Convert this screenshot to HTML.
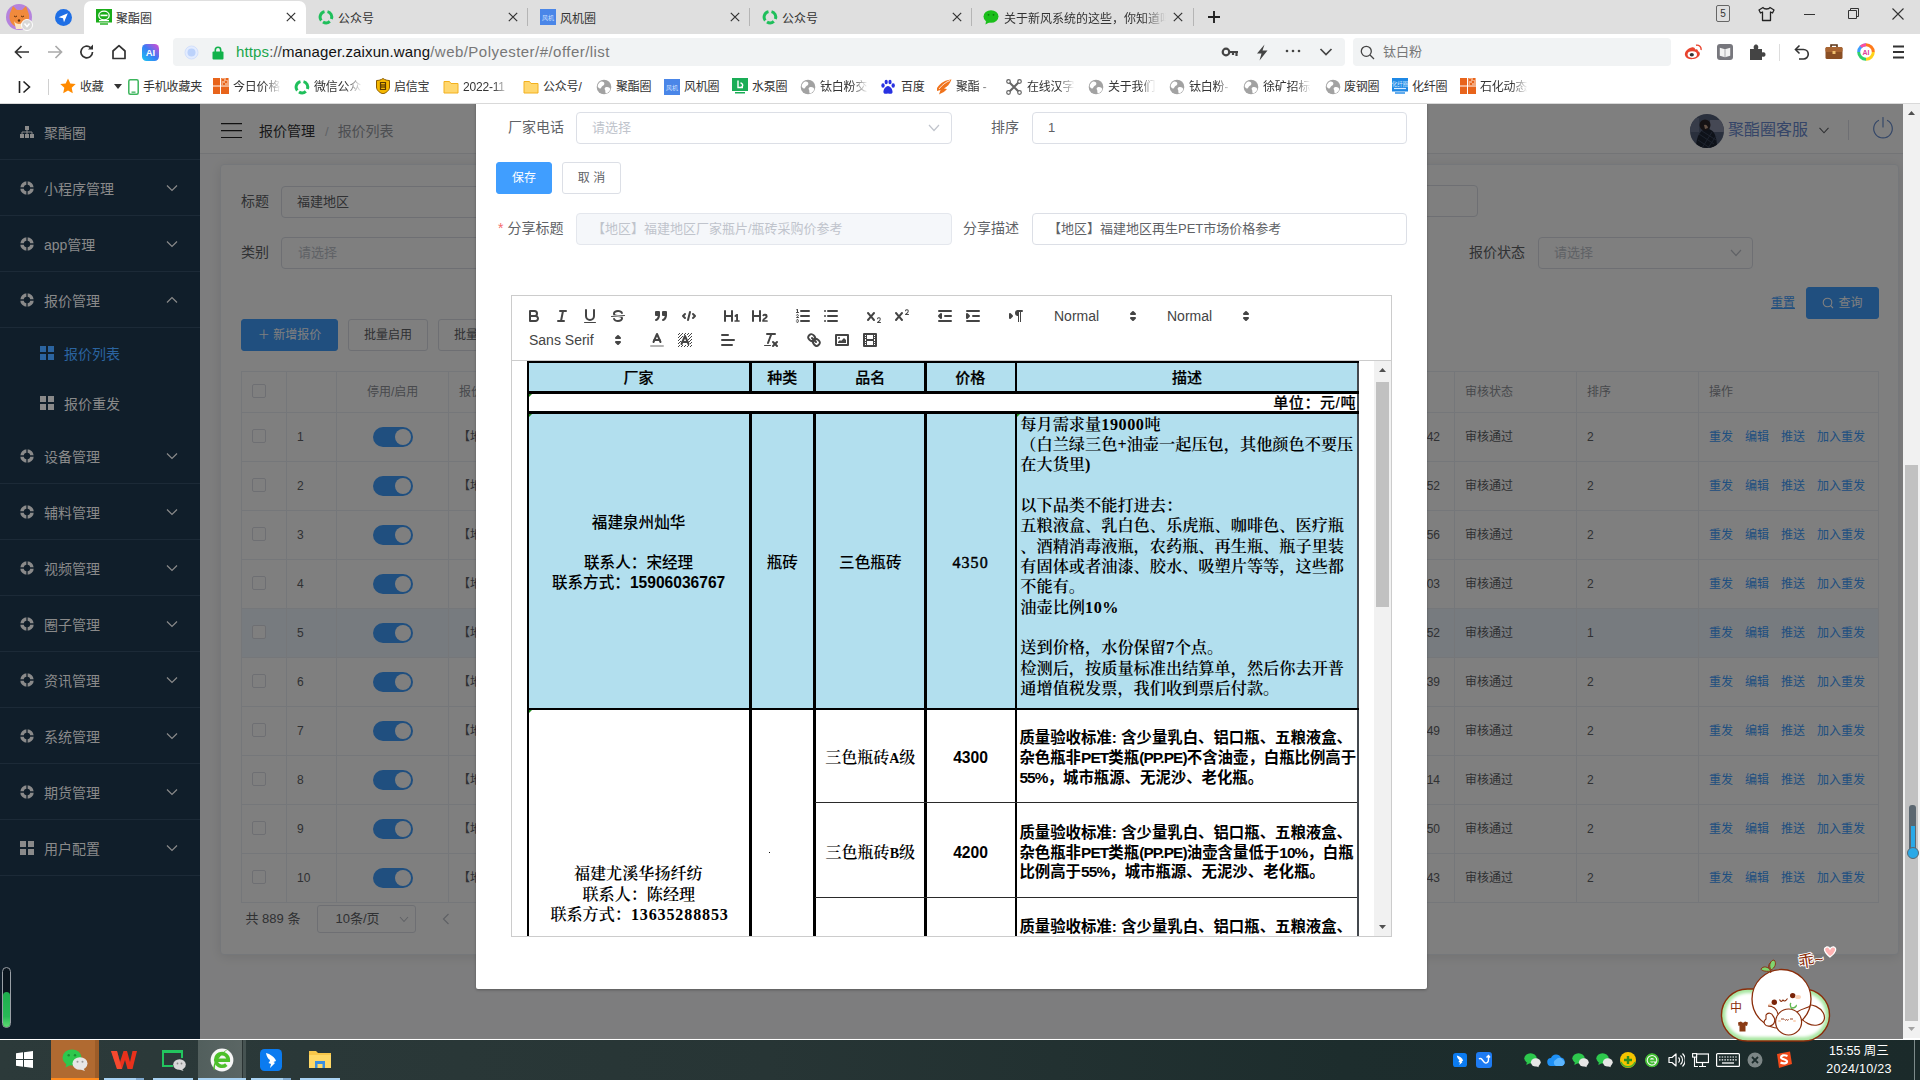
<!DOCTYPE html>
<html lang="zh-CN">
<head>
<meta charset="utf-8">
<title>聚酯圈</title>
<style>
*{box-sizing:border-box;margin:0;padding:0}
html,body{width:1920px;height:1080px;overflow:hidden;background:#fff}
body{font-family:"Liberation Sans","Noto Sans CJK SC",sans-serif;font-size:14px;color:#606266;position:relative}
.abs{position:absolute}
svg{display:block}
/* ---------- browser chrome ---------- */
#tabbar{position:absolute;left:0;top:0;width:1920px;height:34px;background:#dfdfdf}
.tab{position:absolute;top:0;height:34px;font-size:12px;color:#333;line-height:34px;white-space:nowrap}
.tab .fav{position:absolute;top:9px;width:16px;height:16px}
.tab .tt{position:absolute;top:2px;left:32px}
.tab .x{position:absolute;top:10px;width:14px;height:14px}
.tab.active{background:#fff;border-radius:7px 7px 0 0;top:1px;height:33px}
.tsep{position:absolute;top:8px;width:1px;height:18px;background:#b5b5b5}
#addr{position:absolute;left:0;top:34px;width:1920px;height:36px;background:#fff}
#bm{position:absolute;left:0;top:70px;width:1920px;height:34px;background:#fff;font-size:12px;color:#333;border-bottom:1px solid #d9d9d9}
#bm .t{position:absolute;top:1px;line-height:33px;white-space:nowrap;letter-spacing:-.2px}
#bm .i{position:absolute;top:9px;width:16px;height:16px}
.fade{-webkit-mask-image:linear-gradient(90deg,#000 66%,transparent 100%);mask-image:linear-gradient(90deg,#000 66%,transparent 100%)}
.pill{position:absolute;top:4px;height:28px;background:#f1f3f4;border-radius:4px}
/* ---------- page ---------- */
#page{position:absolute;left:0;top:104px;width:1903px;height:935px;background:#fbfbfc;overflow:hidden}
#side{position:absolute;left:0;top:0;width:200px;height:935px;background:#101e2a;z-index:30;color:#8a8a8a;font-size:14px}
#side .it{position:absolute;left:0;width:200px;height:56px;line-height:56px;border-bottom:1px solid #1c2a37}
#side .it .ic{position:absolute;left:20px;top:21px;width:14px;height:14px}
#side .it .tx{position:absolute;left:44px;top:1px;white-space:nowrap}
#side .it .ar{position:absolute;left:166px;top:23px;width:12px;height:10px}
#side .sub{position:absolute;left:0;width:200px;height:50px;line-height:50px}
#side .sub .ic{position:absolute;left:40px;top:18px;width:14px;height:14px}
#side .sub .tx{position:absolute;left:64px;top:1px}
#ovl{position:absolute;left:200px;top:0;width:1703px;height:935px;background:rgba(0,0,0,.5);z-index:20}
#main{position:absolute;left:200px;top:0;width:1703px;height:935px}
#nav{position:absolute;left:0;top:0;width:1703px;height:50px;background:#fff;border-bottom:1px solid #e6e8ec}
#card{position:absolute;left:20px;top:60px;width:1679px;height:791px;background:#fff;border-radius:4px;border:1px solid #ebeef5;box-shadow:0 2px 12px 0 rgba(0,0,0,.1)}
.lbl{position:absolute;font-size:14px;color:#606266;white-space:nowrap;line-height:32px}
.inp{position:absolute;height:32px;border:1px solid #dcdfe6;border-radius:4px;background:#fff;font-size:13px;color:#606266;line-height:30px;padding-left:15px;white-space:nowrap;overflow:hidden}
.inp.ph{color:#c0c4cc}
.inp.dis{background:#f5f7fa;border-color:#e4e7ed;color:#c0c4cc}
.btn{position:absolute;height:32px;border-radius:3px;font-size:12px;line-height:30px;text-align:center;border:1px solid #dcdfe6;background:#fff;color:#606266;white-space:nowrap}
.btn.pri{background:#409eff;border-color:#409eff;color:#fff}
/* table */
#tbl{position:absolute;left:20px;top:206px;width:1638px;height:532px;font-size:12px;color:#606266}
#tbl .hl{position:absolute;left:0;width:1638px;height:1px;background:#ebeef5}
#tbl .vl{position:absolute;top:0;width:1px;height:532px;background:#ebeef5}
#tbl .c{position:absolute;white-space:nowrap;line-height:51px;height:49px}
#tbl .h{color:#909399;line-height:43px;height:41px}
.cb{position:absolute;width:14px;height:14px;border:1px solid #dcdfe6;border-radius:2px;background:#fff}
.sw{position:absolute;width:40px;height:20px;border-radius:10px;background:#409eff}
.sw:after{content:"";position:absolute;right:2px;top:2px;width:16px;height:16px;border-radius:8px;background:#fff}
.lk{color:#409eff}
/* ---------- modal ---------- */
#modal{position:absolute;left:476px;top:-40px;width:951px;height:925px;background:#fff;border-radius:2px;z-index:40;box-shadow:0 1px 3px rgba(0,0,0,.3)}
#modal .lbl{font-size:14px;color:#606266}
#modal .inp{font-size:13px}
/* quill */
#ql{position:absolute;left:35px;top:231px;width:881px;height:642px;border:1px solid #ccc}
#qtb{position:absolute;left:0;top:0;width:879px;height:65px;border-bottom:1px solid #ccc}
.qb{position:absolute;width:18px;height:18px}
.qb .s{fill:none;stroke:#444;stroke-linecap:round;stroke-linejoin:round;stroke-width:2}
.qb .f{fill:#444}
.qb .sf{fill:#444;stroke:#444;stroke-linecap:round;stroke-linejoin:round;stroke-width:2}
.qb .th{stroke-width:1}
.qb .ev{fill-rule:evenodd}
.qp{position:absolute;font-size:14px;font-weight:500;color:#444;line-height:24px;white-space:nowrap}
#qed{position:absolute;left:0;top:65px;width:879px;height:575px;overflow:hidden;background:#fff}
/* editor table */
#et{position:absolute;left:15px;top:0;width:833px;height:640px}
#et .bl{position:absolute;background:#000}
#et .bg{position:absolute;background:#b2dfee}
#et .hd{position:absolute;font-family:"Liberation Sans","Noto Sans CJK SC",sans-serif;font-weight:700;font-size:15px;color:#000;text-align:center;line-height:20px;white-space:nowrap;letter-spacing:1px}
#et .sf{position:absolute;font-family:"Liberation Serif","Noto Serif CJK SC",serif;font-weight:600;font-size:15px;color:#000;white-space:nowrap;line-height:20.35px}
#et .ss{position:absolute;font-family:"Liberation Sans","Noto Sans CJK SC",sans-serif;font-weight:700;font-size:15px;color:#000;white-space:nowrap;line-height:23px}
/* ---------- taskbar ---------- */
#task{position:absolute;left:0;top:1040px;width:1920px;height:40px;background:linear-gradient(90deg,#2c3a3a 0%,#273535 40%,#1d2d2d 70%,#1b2a2a 100%)}
#winline{position:absolute;left:0;top:1038px;width:1920px;height:2px;background:#fff}
#sbar{position:absolute;left:1903px;top:104px;width:17px;height:935px;background:#f1f1f1}
</style>
</head>
<body>
<!-- ================= browser chrome ================= -->
<div id="tabbar">
  <!-- avatar -->
  <svg class="abs" style="left:5px;top:3px" width="30" height="30" viewBox="0 0 30 30">
    <circle cx="14" cy="14" r="13" fill="#b583dd"/>
    <path d="M5 10 L8 3 L12 7 L17 7 L21 3 L23.500 10 C26 17 21 24 14 24 C7 24 3 17 5 10Z" fill="#f08a3c"/>
    <path d="M9 18 C11 22 17 22 19 18 L17 26 L11 26Z" fill="#fbe3c4"/>
    <circle cx="14" cy="17.500" r="1.200" fill="#5a2d0c"/>
    <path d="M9 13 q1.500 1.500 3 0 M16 13 q1.500 1.500 3 0" stroke="#5a2d0c" stroke-width="1" fill="none"/>
    <circle cx="22" cy="22" r="5.500" fill="#d8d8d8" stroke="#fff" stroke-width="1"/>
    <path d="M19.500 20.500 L22 23.500 L24.500 20.500" stroke="#fff" stroke-width="1.500" fill="none"/>
  </svg>
  <!-- blue plane -->
  <svg class="abs" style="left:55px;top:9px" width="17" height="17" viewBox="0 0 17 17">
    <circle cx="8.500" cy="8.500" r="8.500" fill="#1f6fe5"/>
    <path d="M3.500 8.200 L12.800 4.200 L9 13.300 L8 9.300Z" fill="#fff"/>
  </svg>
  <!-- active tab -->
  <div class="tab active" style="left:84px;width:222px">
    <svg class="fav" style="left:12px;top:8px" viewBox="0 0 16 16"><rect x="0" y="0" width="16" height="13.500" fill="#1aad19"/><ellipse cx="8" cy="6.500" rx="5.200" ry="4.300" fill="none" stroke="#fff" stroke-width="1.300"/><rect x="4.500" y="5.600" width="7" height="1.600" fill="#fff"/><rect x="3" y="11" width="10" height="1.300" fill="#fff"/><rect x="4" y="14.300" width="8" height="1.400" fill="#1aad19"/></svg>
    <span class="tt" style="left:32px;top:1px">聚酯圈</span>
    <svg class="x" style="left:200px;top:9px" viewBox="0 0 14 14"><path d="M2.800 2.800 L11.200 11.200 M11.200 2.800 L2.800 11.200" stroke="#333" stroke-width="1.200"/></svg>
  </div>
  <!-- tab 2 -->
  <div class="tab" style="left:306px;width:222px">
    <svg class="fav" style="left:12px" viewBox="0 0 16 16"><g fill="none" stroke="#1fbf5b" stroke-width="3"><path d="M3.300 11.500 A5.600 5.600 0 0 1 6.500 2.600"/><path d="M9.500 2.600 A5.600 5.600 0 0 1 13.400 10"/><path d="M11.800 12.300 A5.600 5.600 0 0 1 5 12.900"/></g></svg>
    <span class="tt">公众号</span>
    <svg class="x" style="left:200px" viewBox="0 0 14 14"><path d="M2.800 2.800 L11.200 11.200 M11.200 2.800 L2.800 11.200" stroke="#333" stroke-width="1.200"/></svg>
  </div>
  <div class="tsep" style="left:527px"></div>
  <!-- tab 3 -->
  <div class="tab" style="left:528px;width:222px">
    <svg class="fav" style="left:12px" viewBox="0 0 16 16"><rect width="16" height="16" fill="#4a86e8"/><text x="8" y="10.500" font-size="6" fill="#cfe0ff" text-anchor="middle" font-family="Liberation Sans,Noto Sans CJK SC,sans-serif">风机</text></svg>
    <span class="tt">风机圈</span>
    <svg class="x" style="left:200px" viewBox="0 0 14 14"><path d="M2.800 2.800 L11.200 11.200 M11.200 2.800 L2.800 11.200" stroke="#333" stroke-width="1.200"/></svg>
  </div>
  <div class="tsep" style="left:749px"></div>
  <!-- tab 4 -->
  <div class="tab" style="left:750px;width:222px">
    <svg class="fav" style="left:12px" viewBox="0 0 16 16"><g fill="none" stroke="#1fbf5b" stroke-width="3"><path d="M3.300 11.500 A5.600 5.600 0 0 1 6.500 2.600"/><path d="M9.500 2.600 A5.600 5.600 0 0 1 13.400 10"/><path d="M11.800 12.300 A5.600 5.600 0 0 1 5 12.900"/></g></svg>
    <span class="tt">公众号</span>
    <svg class="x" style="left:200px" viewBox="0 0 14 14"><path d="M2.800 2.800 L11.200 11.200 M11.200 2.800 L2.800 11.200" stroke="#333" stroke-width="1.200"/></svg>
  </div>
  <div class="tsep" style="left:971px"></div>
  <!-- tab 5 -->
  <div class="tab" style="left:972px;width:222px">
    <svg class="fav" style="left:11px" viewBox="0 0 16 16"><ellipse cx="8" cy="7.500" rx="7.500" ry="6.300" fill="#1bbf1b"/><path d="M3 12 L2.500 15.500 L7 13Z" fill="#1bbf1b"/><circle cx="5.500" cy="5.800" r=".9" fill="#0b7a0b"/><circle cx="10.500" cy="5.800" r=".9" fill="#0b7a0b"/></svg>
    <span class="tt" style="left:32px;width:162px;overflow:hidden;-webkit-mask-image:linear-gradient(90deg,#000 86%,transparent 100%);mask-image:linear-gradient(90deg,#000 86%,transparent 100%)">关于新风系统的这些，你知道吗</span>
    <svg class="x" style="left:199px" viewBox="0 0 14 14"><path d="M2.800 2.800 L11.200 11.200 M11.200 2.800 L2.800 11.200" stroke="#333" stroke-width="1.200"/></svg>
  </div>
  <div class="tsep" style="left:1193px"></div>
  <svg class="abs" style="left:1206px;top:9px" width="16" height="16" viewBox="0 0 16 16"><path d="M8 2 V14 M2 8 H14" stroke="#222" stroke-width="1.900"/></svg>
  <!-- window controls -->
  <div class="abs" style="left:1716px;top:5px;width:14px;height:17px;border:1px solid #666;border-radius:2px;font-size:10px;line-height:15px;text-align:center;color:#333">5</div>
  <svg class="abs" style="left:1758px;top:6px" width="17" height="16" viewBox="0 0 17 16"><path d="M5 1.500 L1 4 L2.500 7 L4.500 6 V14.500 H12.500 V6 L14.500 7 L16 4 L12 1.500 C11 3.500 6 3.500 5 1.500Z" fill="none" stroke="#222" stroke-width="1.300" stroke-linejoin="round"/></svg>
  <div class="abs" style="left:1804px;top:14px;width:11px;height:1px;background:#333"></div>
  <svg class="abs" style="left:1848px;top:8px" width="12" height="12" viewBox="0 0 12 12"><path d="M0.500 2.500 H8.500 V10.500 H0.500Z M2.500 2.500 V0.500 H10.500 V8.500 H8.500" fill="none" stroke="#333" stroke-width="1"/></svg>
  <svg class="abs" style="left:1892px;top:8px" width="12" height="12" viewBox="0 0 12 12"><path d="M0.500 0.500 L11.500 11.500 M11.500 0.500 L0.500 11.500" stroke="#333" stroke-width="1.100"/></svg>
</div>

<div id="addr">
  <svg class="abs" style="left:14px;top:10px" width="16" height="16" viewBox="0 0 16 16"><path d="M15 8 H2 M7.500 2 L1.500 8 L7.500 14" fill="none" stroke="#333" stroke-width="1.700"/></svg>
  <svg class="abs" style="left:47px;top:10px" width="16" height="16" viewBox="0 0 16 16"><path d="M1 8 H14 M8.500 2 L14.500 8 L8.500 14" fill="none" stroke="#aaa" stroke-width="1.700"/></svg>
  <svg class="abs" style="left:79px;top:10px" width="16" height="16" viewBox="0 0 16 16"><path d="M13.500 8 A5.800 5.800 0 1 1 11.500 3.600" fill="none" stroke="#333" stroke-width="1.700"/><path d="M9 5.500 H14 V0.500Z" fill="#333"/></svg>
  <svg class="abs" style="left:111px;top:10px" width="16" height="16" viewBox="0 0 16 16"><path d="M2 14.500 V7 L8 1.700 L14 7 V14.500Z" fill="none" stroke="#333" stroke-width="1.700" stroke-linejoin="round"/></svg>
  <svg class="abs" style="left:142px;top:10px" width="17" height="17" viewBox="0 0 17 17"><defs><linearGradient id="aig" x1="0" y1="1" x2="1" y2="0"><stop offset="0" stop-color="#19c8f0"/><stop offset=".5" stop-color="#3a7cf5"/><stop offset="1" stop-color="#e04ad0"/></linearGradient></defs><rect width="17" height="17" rx="4.500" fill="url(#aig)"/><text x="8.500" y="12.300" font-size="9.500" font-weight="700" fill="#fff" text-anchor="middle" font-family="Liberation Sans,sans-serif">AI</text></svg>
  <div class="pill" style="left:173px;width:1172px"></div>
  <svg class="abs" style="left:184px;top:11px" width="15" height="15" viewBox="0 0 15 15"><circle cx="7.500" cy="7.500" r="6.500" fill="#e3ecff" stroke="#d3e0fb" stroke-width="1"/><circle cx="7.500" cy="7.500" r="4" fill="#bcd2fb"/></svg>
  <svg class="abs" style="left:212px;top:12px" width="12" height="14" viewBox="0 0 12 14"><path d="M3.300 6 V4 A2.700 2.700 0 0 1 8.700 4 V6" fill="none" stroke="#12b24b" stroke-width="1.600"/><rect x="0.500" y="5.500" width="11" height="8" rx="1" fill="#12b24b"/></svg>
  <div class="abs" style="left:236px;top:7px;font-size:15px;line-height:22px;white-space:nowrap;letter-spacing:.12px;color:#777"><span style="color:#1aa64b">https</span><span style="color:#555">://</span><span style="color:#111">manager.zaixun.wang</span><span style="letter-spacing:.46px">/web/Polyester/#/offer/list</span></div>
  <!-- right inside pill -->
  <svg class="abs" style="left:1221px;top:11px" width="18" height="14" viewBox="0 0 18 14"><circle cx="5" cy="7" r="3.300" fill="none" stroke="#444" stroke-width="2.200"/><path d="M8 7 H17 M15.500 7 V11 M12 7 V10" stroke="#444" stroke-width="2.200" fill="none"/></svg>
  <svg class="abs" style="left:1255px;top:10px" width="14" height="17" viewBox="0 0 14 17"><path d="M9.500 0.500 L2 9.500 H6.500 L4.500 16.500 L12.500 6.500 H7.500Z" fill="#444"/></svg>
  <svg class="abs" style="left:1285px;top:15px" width="16" height="4" viewBox="0 0 16 4"><circle cx="2" cy="2" r="1.300" fill="#444"/><circle cx="8" cy="2" r="1.300" fill="#444"/><circle cx="14" cy="2" r="1.300" fill="#444"/></svg>
  <svg class="abs" style="left:1319px;top:14px" width="14" height="8" viewBox="0 0 14 8"><path d="M1.500 1 L7 6.500 L12.500 1" fill="none" stroke="#444" stroke-width="1.700"/></svg>
  <div class="pill" style="left:1353px;width:318px"></div>
  <svg class="abs" style="left:1360px;top:11px" width="15" height="15" viewBox="0 0 15 15"><circle cx="6.300" cy="6.300" r="5" fill="none" stroke="#444" stroke-width="1.300"/><path d="M10 10 L14 14" stroke="#444" stroke-width="1.300"/></svg>
  <div class="abs" style="left:1383px;top:8px;font-size:13px;line-height:20px;color:#777">钛白粉</div>
  <!-- right icons -->
  <svg class="abs" style="left:1684px;top:10px" width="18" height="16" viewBox="0 0 18 16"><path d="M7.500 3.500 C3 4.500 0.300 8.500 1 11.200 C1.700 14.300 5.500 15.600 9.500 15 C13.500 14.400 16.300 11.800 15.800 9.300 C15.500 7.800 14.300 7.300 13.800 7.300 C14.300 5.800 13.300 4.600 11 5.400 C11.200 3.800 9.500 3 7.500 3.500Z" fill="#e8432e"/><path d="M12 1.200 C15 0.600 17.600 3 17 6" fill="none" stroke="#e8432e" stroke-width="1.400"/><ellipse cx="8.300" cy="10.600" rx="4.700" ry="3.300" fill="#fff"/><ellipse cx="7.800" cy="10.800" rx="2.100" ry="1.800" fill="#333"/></svg>
  <svg class="abs" style="left:1716px;top:9px" width="18" height="18" viewBox="0 0 18 18"><rect x="1" y="1" width="16" height="16" rx="3" fill="#77777d"/><path d="M3.800 4.800 L9 6.300 L14.200 4.800 V12.800 L9 14.300 L3.800 12.800Z" fill="#f2f2f2"/><path d="M9 6.300 V14.300" stroke="#9a9aa0" stroke-width=".8"/></svg>
  <svg class="abs" style="left:1748px;top:9px" width="18" height="18" viewBox="0 0 18 18"><path d="M2 6 H6 C5 3 6.500 1.500 8 1.500 C9.500 1.500 11 3 10 6 H14 V9.500 C17 8.500 17.500 10.500 17.500 11.500 C17.500 12.500 17 14.500 14 13.500 V17 H2Z" fill="#444"/></svg>
  <div class="abs" style="left:1779px;top:10px;width:1px;height:17px;background:#ddd"></div>
  <svg class="abs" style="left:1793px;top:10px" width="17" height="17" viewBox="0 0 17 17"><path d="M3 5.500 H10.500 A4.700 4.700 0 0 1 10.500 15 H6" fill="none" stroke="#333" stroke-width="1.600"/><path d="M6.500 1.500 L2.500 5.500 L6.500 9.500" fill="none" stroke="#333" stroke-width="1.600"/></svg>
  <svg class="abs" style="left:1825px;top:9px" width="18" height="17" viewBox="0 0 18 17"><path d="M6 4 V2 H12 V4" fill="none" stroke="#5a3314" stroke-width="1.600"/><rect x="0.500" y="4" width="17" height="12" rx="1.500" fill="#8a4f24"/><rect x="0.500" y="4" width="17" height="5" rx="1.500" fill="#a86431"/><rect x="7.500" y="8" width="3" height="3" fill="#f0c070"/></svg>
  <svg class="abs" style="left:1857px;top:9px" width="18" height="18" viewBox="0 0 18 18"><circle cx="9" cy="9" r="7.300" fill="#fff"/><g fill="none" stroke-width="3"><path d="M9 1.700 A7.300 7.300 0 0 1 16.300 9" stroke="#ff7a1a"/><path d="M16.300 9 A7.300 7.300 0 0 1 9 16.300" stroke="#ffd21a"/><path d="M9 16.300 A7.300 7.300 0 0 1 1.700 9" stroke="#2fd06a"/><path d="M1.700 9 A7.300 7.300 0 0 1 9 1.700" stroke="#3a9dff"/><path d="M3.800 3.800 A7.300 7.300 0 0 1 9 1.700" stroke="#ff4f9a"/></g><text x="9" y="11.700" font-size="7" font-weight="700" fill="#e0409a" text-anchor="middle" font-family="Liberation Sans,sans-serif">AI</text></svg>
  <svg class="abs" style="left:1893px;top:11px" width="11" height="14" viewBox="0 0 11 14"><path d="M0 1.500 H11 M0 7 H11 M0 12.500 H11" stroke="#333" stroke-width="1.900"/></svg>
</div>
<div id="bm">
  <svg class="abs" style="left:18px;top:10px" width="14" height="14" viewBox="0 0 14 14"><path d="M1.500 1 V13 M5.500 1.500 L11.500 7 L5.500 12.500" fill="none" stroke="#222" stroke-width="1.600"/></svg>
  <div class="abs" style="left:48px;top:9px;width:1px;height:16px;background:#d0d0d0"></div>
  <svg class="i" style="left:60px;top:8px" viewBox="0 0 16 16"><path d="M8 0.500 L10.300 5.500 L15.700 6.100 L11.700 9.800 L12.800 15.200 L8 12.500 L3.200 15.200 L4.300 9.800 L0.300 6.100 L5.700 5.500Z" fill="#ff8a00"/></svg>
  <span class="t" style="left:80px">收藏</span>
  <svg class="abs" style="left:114px;top:14px" width="8" height="5" viewBox="0 0 8 5"><path d="M0 0 H8 L4 5Z" fill="#333"/></svg>
  <svg class="abs" style="left:128px;top:9px" width="11" height="16" viewBox="0 0 11 16"><rect x="0.800" y="0.800" width="9.400" height="14.400" rx="1.500" fill="#fff" stroke="#3cb55c" stroke-width="1.500"/><rect x="3.500" y="12.500" width="4" height="1.300" fill="#3cb55c"/></svg>
  <span class="t" style="left:143px">手机收藏夹</span>
  <svg class="i" style="left:213px;top:8px" viewBox="0 0 16 16"><rect width="16" height="16" fill="#e8641b"/><path d="M7.500 0 V16 M0 8 H16" stroke="#fff" stroke-width="1"/><rect x="8.500" y="0" width="7.500" height="7.500" fill="#f4a77a"/><path d="M9 1 h2 v2 h-2z M12 3 h2 v2 h-2z M10 5 h2 v2 h-2z M13 0 h2 v2 h-2z" fill="#e8641b"/></svg>
  <span class="t fade" style="left:233px;width:48px;overflow:hidden">今日价格</span>
  <svg class="i" style="left:294px" viewBox="0 0 16 16"><g fill="none" stroke="#1fbf5b" stroke-width="3"><path d="M3.300 11.500 A5.600 5.600 0 0 1 6.500 2.600"/><path d="M9.500 2.600 A5.600 5.600 0 0 1 13.400 10"/><path d="M11.800 12.300 A5.600 5.600 0 0 1 5 12.900"/></g></svg>
  <span class="t fade" style="left:314px;width:48px;overflow:hidden">微信公众</span>
  <svg class="i" style="left:375px;top:8px" viewBox="0 0 16 16"><path d="M8 0.500 C10 2 12.500 2.500 14.500 2.500 V9 C14.500 12.500 11 15 8 15.800 C5 15 1.500 12.500 1.500 9 V2.500 C3.500 2.500 6 2 8 0.500Z" fill="#f5b800" stroke="#8a5a00" stroke-width="1"/><path d="M5.500 4.500 H10.500 V11.500 H5.500Z M7 6 V10 M9 6 V10" fill="none" stroke="#5a3a00" stroke-width="1.200"/></svg>
  <span class="t" style="left:394px">启信宝</span>
  <svg class="i" style="left:443px" viewBox="0 0 16 16"><path d="M1 2.500 H6.500 L8 4.500 H15 V14 H1Z" fill="#ffd76e" stroke="#f2b01e" stroke-width="1"/></svg>
  <span class="t fade" style="left:463px;width:46px;overflow:hidden">2022-11</span>
  <svg class="i" style="left:523px" viewBox="0 0 16 16"><path d="M1 2.500 H6.500 L8 4.500 H15 V14 H1Z" fill="#ffd76e" stroke="#f2b01e" stroke-width="1"/></svg>
  <span class="t" style="left:543px">公众号/</span>
  <svg class="i" style="left:596px" viewBox="0 0 16 16"><circle cx="8" cy="8" r="7.300" fill="#a2a2a2"/><path d="M4.500 2.800 C6.500 2 8.800 3 8.300 5.200 C7.800 7 5.800 6.500 5.300 8.500 C4.800 10.300 3 9.500 1.800 8 C1.500 5.800 2.700 3.800 4.500 2.800Z M9.800 8.200 C11.800 7.500 13.800 8.500 14.300 10 C13.800 12.500 11.800 14 9.800 14.400 C8.800 13 9.800 11.500 8.800 10.500 C8.300 9.500 8.800 8.500 9.800 8.200Z" fill="#fff"/></svg>
  <span class="t" style="left:616px">聚酯圈</span>
  <svg class="i" style="left:664px" viewBox="0 0 16 16"><rect width="16" height="16" fill="#4a86e8"/><text x="8" y="10.500" font-size="6" fill="#cfe0ff" text-anchor="middle" font-family="Liberation Sans,Noto Sans CJK SC,sans-serif">风机</text></svg>
  <span class="t" style="left:684px">风机圈</span>
  <svg class="i" style="left:732px;top:8px" viewBox="0 0 16 16"><rect width="16" height="13" fill="#1aad56"/><path d="M6 2.500 V9.500 H11 M8.500 5 A2.200 2.200 0 1 1 8.500 9.400" fill="none" stroke="#fff" stroke-width="1.400"/><rect x="3" y="14" width="10" height="1.500" fill="#1aad56"/></svg>
  <span class="t" style="left:752px">水泵圈</span>
  <svg class="i" style="left:800px" viewBox="0 0 16 16"><circle cx="8" cy="8" r="7.300" fill="#a2a2a2"/><path d="M4.500 2.800 C6.500 2 8.800 3 8.300 5.200 C7.800 7 5.800 6.500 5.300 8.500 C4.800 10.300 3 9.500 1.800 8 C1.500 5.800 2.700 3.800 4.500 2.800Z M9.800 8.200 C11.800 7.500 13.800 8.500 14.300 10 C13.800 12.500 11.800 14 9.800 14.400 C8.800 13 9.800 11.500 8.800 10.500 C8.300 9.500 8.800 8.500 9.800 8.200Z" fill="#fff"/></svg>
  <span class="t fade" style="left:820px;width:48px;overflow:hidden">钛白粉交</span>
  <svg class="i" style="left:880px" viewBox="0 0 16 16"><g fill="#2932e1"><ellipse cx="3" cy="6.500" rx="1.700" ry="2.300"/><ellipse cx="6.200" cy="3" rx="1.600" ry="2.300"/><ellipse cx="10" cy="3" rx="1.600" ry="2.300"/><ellipse cx="13.200" cy="6.500" rx="1.700" ry="2.300"/><path d="M8 7 C10.500 7 13 11 12.500 13.500 C12 15.500 9.500 14.500 8 14.500 C6.500 14.500 4 15.500 3.500 13.500 C3 11 5.500 7 8 7Z"/></g></svg>
  <span class="t" style="left:901px">百度</span>
  <svg class="i" style="left:936px" viewBox="0 0 16 16"><path d="M1 9 C5 3 10 1 15.500 0.500 C14 5 11 8 8 9.500 L11 10 C9 12.500 6 14 3 15.500 L4.500 11 L1 12Z" fill="#f0731c"/><path d="M3 10 C6 6 10 3 14 1.500" stroke="#fff" stroke-width=".8" fill="none"/></svg>
  <span class="t fade" style="left:956px;width:36px;overflow:hidden">聚酯 -</span>
  <svg class="i" style="left:1006px" viewBox="0 0 16 16"><path d="M2.500 2.500 L13.500 13.500 M13.500 2.500 L2.500 13.500" stroke="#666" stroke-width="2"/><circle cx="2.500" cy="2.500" r="1.800" fill="#fff" stroke="#666" stroke-width="1.200"/><circle cx="13.500" cy="2.500" r="1.800" fill="#fff" stroke="#666" stroke-width="1.200"/><circle cx="2.500" cy="13.500" r="1.800" fill="#fff" stroke="#666" stroke-width="1.200"/><circle cx="13.500" cy="13.500" r="1.800" fill="#fff" stroke="#666" stroke-width="1.200"/></svg>
  <span class="t fade" style="left:1027px;width:48px;overflow:hidden">在线汉字</span>
  <svg class="i" style="left:1088px" viewBox="0 0 16 16"><circle cx="8" cy="8" r="7.300" fill="#a2a2a2"/><path d="M4.500 2.800 C6.500 2 8.800 3 8.300 5.200 C7.800 7 5.800 6.500 5.300 8.500 C4.800 10.300 3 9.500 1.800 8 C1.500 5.800 2.700 3.800 4.500 2.800Z M9.800 8.200 C11.800 7.500 13.800 8.500 14.300 10 C13.800 12.500 11.800 14 9.800 14.400 C8.800 13 9.800 11.500 8.800 10.500 C8.300 9.500 8.800 8.500 9.800 8.200Z" fill="#fff"/></svg>
  <span class="t fade" style="left:1108px;width:48px;overflow:hidden">关于我们</span>
  <svg class="i" style="left:1169px" viewBox="0 0 16 16"><circle cx="8" cy="8" r="7.300" fill="#a2a2a2"/><path d="M4.500 2.800 C6.500 2 8.800 3 8.300 5.200 C7.800 7 5.800 6.500 5.300 8.500 C4.800 10.300 3 9.500 1.800 8 C1.500 5.800 2.700 3.800 4.500 2.800Z M9.800 8.200 C11.800 7.500 13.800 8.500 14.300 10 C13.800 12.500 11.800 14 9.800 14.400 C8.800 13 9.800 11.500 8.800 10.500 C8.300 9.500 8.800 8.500 9.800 8.200Z" fill="#fff"/></svg>
  <span class="t fade" style="left:1189px;width:42px;overflow:hidden">钛白粉-</span>
  <svg class="i" style="left:1243px" viewBox="0 0 16 16"><circle cx="8" cy="8" r="7.300" fill="#a2a2a2"/><path d="M4.500 2.800 C6.500 2 8.800 3 8.300 5.200 C7.800 7 5.800 6.500 5.300 8.500 C4.800 10.300 3 9.500 1.800 8 C1.500 5.800 2.700 3.800 4.500 2.800Z M9.800 8.200 C11.800 7.500 13.800 8.500 14.300 10 C13.800 12.500 11.800 14 9.800 14.400 C8.800 13 9.800 11.500 8.800 10.500 C8.300 9.500 8.800 8.500 9.800 8.200Z" fill="#fff"/></svg>
  <span class="t fade" style="left:1263px;width:48px;overflow:hidden">徐矿招标</span>
  <svg class="i" style="left:1325px" viewBox="0 0 16 16"><circle cx="8" cy="8" r="7.300" fill="#a2a2a2"/><path d="M4.500 2.800 C6.500 2 8.800 3 8.300 5.200 C7.800 7 5.800 6.500 5.300 8.500 C4.800 10.300 3 9.500 1.800 8 C1.500 5.800 2.700 3.800 4.500 2.800Z M9.800 8.200 C11.800 7.500 13.800 8.500 14.300 10 C13.800 12.500 11.800 14 9.800 14.400 C8.800 13 9.800 11.500 8.800 10.500 C8.300 9.500 8.800 8.500 9.800 8.200Z" fill="#fff"/></svg>
  <span class="t" style="left:1344px">废钢圈</span>
  <svg class="i" style="left:1392px;top:8px" viewBox="0 0 16 16"><rect width="16" height="13.500" fill="#1e88e5"/><text x="8" y="8" font-size="5.500" fill="#d8ecff" text-anchor="middle" font-family="Liberation Sans,Noto Sans CJK SC,sans-serif">化纤圈</text><path d="M2 10.500 H14" stroke="#d8ecff" stroke-width="1.200"/><rect x="3" y="14.300" width="10" height="1.400" fill="#1e88e5"/></svg>
  <span class="t" style="left:1412px">化纤圈</span>
  <svg class="i" style="left:1460px;top:8px" viewBox="0 0 16 16"><rect width="16" height="16" fill="#e8641b"/><path d="M7.500 0 V16 M0 8 H16" stroke="#fff" stroke-width="1"/><rect x="8.500" y="0" width="7.500" height="7.500" fill="#f4a77a"/><path d="M9 1 h2 v2 h-2z M12 3 h2 v2 h-2z M10 5 h2 v2 h-2z M13 0 h2 v2 h-2z" fill="#e8641b"/></svg>
  <span class="t fade" style="left:1480px;width:48px;overflow:hidden">石化动态</span>
</div>
<!-- ================= page ================= -->
<div id="page">
<div id="side">
<div class="it" style="top:0px"><svg class="ic" viewBox="0 0 14 14"><g fill="#8a8a8a"><rect x="5" y="1" width="4" height="4"/><rect x="0" y="9" width="4" height="4"/><rect x="5" y="9" width="4" height="4"/><rect x="10" y="9" width="4" height="4"/></g><path d="M7 5 V9 M2 9 V7 H12 V9" fill="none" stroke="#8a8a8a" stroke-width="1"/></svg><span class="tx">聚酯圈</span></div>
<div class="it" style="top:56px"><svg class="ic" viewBox="0 0 14 14"><circle cx="7" cy="7" r="5" fill="none" stroke="#8a8a8a" stroke-width="3.600"/><path d="M7 0 V14 M0 7 H14" stroke="#101e2a" stroke-width="1.300"/></svg><span class="tx">小程序管理</span><svg class="ar" viewBox="0 0 12 10"><path d="M1 2.500 L6 7.500 L11 2.500" fill="none" stroke="#8a8a8a" stroke-width="1.200"/></svg></div>
<div class="it" style="top:112px"><svg class="ic" viewBox="0 0 14 14"><circle cx="7" cy="7" r="5" fill="none" stroke="#8a8a8a" stroke-width="3.600"/><path d="M7 0 V14 M0 7 H14" stroke="#101e2a" stroke-width="1.300"/></svg><span class="tx">app管理</span><svg class="ar" viewBox="0 0 12 10"><path d="M1 2.500 L6 7.500 L11 2.500" fill="none" stroke="#8a8a8a" stroke-width="1.200"/></svg></div>
<div class="it" style="top:168px"><svg class="ic" viewBox="0 0 14 14"><circle cx="7" cy="7" r="5" fill="none" stroke="#8a8a8a" stroke-width="3.600"/><path d="M7 0 V14 M0 7 H14" stroke="#101e2a" stroke-width="1.300"/></svg><span class="tx">报价管理</span><svg class="ar" viewBox="0 0 12 10"><path d="M1 7.500 L6 2.500 L11 7.500" fill="none" stroke="#8a8a8a" stroke-width="1.200"/></svg></div>
<div class="it" style="top:324px"><svg class="ic" viewBox="0 0 14 14"><circle cx="7" cy="7" r="5" fill="none" stroke="#8a8a8a" stroke-width="3.600"/><path d="M7 0 V14 M0 7 H14" stroke="#101e2a" stroke-width="1.300"/></svg><span class="tx">设备管理</span><svg class="ar" viewBox="0 0 12 10"><path d="M1 2.500 L6 7.500 L11 2.500" fill="none" stroke="#8a8a8a" stroke-width="1.200"/></svg></div>
<div class="it" style="top:380px"><svg class="ic" viewBox="0 0 14 14"><circle cx="7" cy="7" r="5" fill="none" stroke="#8a8a8a" stroke-width="3.600"/><path d="M7 0 V14 M0 7 H14" stroke="#101e2a" stroke-width="1.300"/></svg><span class="tx">辅料管理</span><svg class="ar" viewBox="0 0 12 10"><path d="M1 2.500 L6 7.500 L11 2.500" fill="none" stroke="#8a8a8a" stroke-width="1.200"/></svg></div>
<div class="it" style="top:436px"><svg class="ic" viewBox="0 0 14 14"><circle cx="7" cy="7" r="5" fill="none" stroke="#8a8a8a" stroke-width="3.600"/><path d="M7 0 V14 M0 7 H14" stroke="#101e2a" stroke-width="1.300"/></svg><span class="tx">视频管理</span><svg class="ar" viewBox="0 0 12 10"><path d="M1 2.500 L6 7.500 L11 2.500" fill="none" stroke="#8a8a8a" stroke-width="1.200"/></svg></div>
<div class="it" style="top:492px"><svg class="ic" viewBox="0 0 14 14"><circle cx="7" cy="7" r="5" fill="none" stroke="#8a8a8a" stroke-width="3.600"/><path d="M7 0 V14 M0 7 H14" stroke="#101e2a" stroke-width="1.300"/></svg><span class="tx">圈子管理</span><svg class="ar" viewBox="0 0 12 10"><path d="M1 2.500 L6 7.500 L11 2.500" fill="none" stroke="#8a8a8a" stroke-width="1.200"/></svg></div>
<div class="it" style="top:548px"><svg class="ic" viewBox="0 0 14 14"><circle cx="7" cy="7" r="5" fill="none" stroke="#8a8a8a" stroke-width="3.600"/><path d="M7 0 V14 M0 7 H14" stroke="#101e2a" stroke-width="1.300"/></svg><span class="tx">资讯管理</span><svg class="ar" viewBox="0 0 12 10"><path d="M1 2.500 L6 7.500 L11 2.500" fill="none" stroke="#8a8a8a" stroke-width="1.200"/></svg></div>
<div class="it" style="top:604px"><svg class="ic" viewBox="0 0 14 14"><circle cx="7" cy="7" r="5" fill="none" stroke="#8a8a8a" stroke-width="3.600"/><path d="M7 0 V14 M0 7 H14" stroke="#101e2a" stroke-width="1.300"/></svg><span class="tx">系统管理</span><svg class="ar" viewBox="0 0 12 10"><path d="M1 2.500 L6 7.500 L11 2.500" fill="none" stroke="#8a8a8a" stroke-width="1.200"/></svg></div>
<div class="it" style="top:660px"><svg class="ic" viewBox="0 0 14 14"><circle cx="7" cy="7" r="5" fill="none" stroke="#8a8a8a" stroke-width="3.600"/><path d="M7 0 V14 M0 7 H14" stroke="#101e2a" stroke-width="1.300"/></svg><span class="tx">期货管理</span><svg class="ar" viewBox="0 0 12 10"><path d="M1 2.500 L6 7.500 L11 2.500" fill="none" stroke="#8a8a8a" stroke-width="1.200"/></svg></div>
<div class="it" style="top:716px"><svg class="ic" viewBox="0 0 14 14"><g fill="#8a8a8a"><rect x="0" y="0" width="6" height="6"/><rect x="8" y="0" width="6" height="6"/><rect x="0" y="8" width="6" height="6"/><rect x="8" y="8" width="6" height="6"/></g></svg><span class="tx">用户配置</span><svg class="ar" viewBox="0 0 12 10"><path d="M1 2.500 L6 7.500 L11 2.500" fill="none" stroke="#8a8a8a" stroke-width="1.200"/></svg></div>
<div class="sub" style="top:224px;color:#2b64a0"><svg class="ic" viewBox="0 0 14 14"><g fill="#2b64a0"><rect x="0" y="0" width="6" height="6"/><rect x="8" y="0" width="6" height="6"/><rect x="0" y="8" width="6" height="6"/><rect x="8" y="8" width="6" height="6"/></g></svg><span class="tx">报价列表</span></div>
<div class="sub" style="top:274px"><svg class="ic" viewBox="0 0 14 14"><g fill="#8a8a8a"><rect x="0" y="0" width="6" height="6"/><rect x="8" y="0" width="6" height="6"/><rect x="0" y="8" width="6" height="6"/><rect x="8" y="8" width="6" height="6"/></g></svg><span class="tx">报价重发</span></div>
<div class="abs" style="left:2px;top:863px;width:9px;height:61px;border:1px solid #9aa0a6;border-radius:4.500px;background:#0b151e"></div>
<div class="abs" style="left:3px;top:888px;width:7px;height:35px;border-radius:3.500px;background:linear-gradient(#1fae4e,#27b956 70%,#5fdc72)"></div>
</div>
<div id="main">
<div id="nav">
<svg class="abs" style="left:21px;top:19px" width="21" height="15" viewBox="0 0 21 15"><path d="M0 0.700 H21 M0 7.700 H21 M0 14.500 H21" stroke="#222" stroke-width="1.200"/></svg>
<div class="abs" style="left:59px;top:0;line-height:54px;font-size:14px;color:#303133;white-space:nowrap">报价管理<span style="color:#c0c4cc;margin:0 9px 0 10px;font-size:13px">/</span><span style="color:#999ca3">报价列表</span></div>
<svg class="abs" style="left:1490px;top:10px" width="34" height="34" viewBox="0 0 34 34"><defs><clipPath id="avc"><circle cx="17" cy="17" r="17"/></clipPath></defs><g clip-path="url(#avc)"><rect width="34" height="34" fill="#55607a"/><rect x="20" y="6" width="14" height="12" fill="#8a90a8"/><rect x="0" y="4" width="9" height="14" fill="#6e7892"/><path d="M6 34 C6 20 12 15 17 15 C24 15 27 22 27 34Z" fill="#1d2433"/><circle cx="15" cy="11" r="5.500" fill="#2a2226"/><path d="M14 11 q3 -1 4 3 l-3 1z" fill="#c9a48e"/><path d="M9 20 L24 30 M12 17 L26 26 M8 26 L20 34 M22 18 L12 34 M26 22 L18 34" stroke="#3b465c" stroke-width="1"/></g></svg>
<div class="abs" style="left:1528px;top:0;line-height:52px;font-size:16px;color:#6a8ad0;white-space:nowrap">聚酯圈客服</div>
<svg class="abs" style="left:1619px;top:22.500px" width="10" height="7" viewBox="0 0 10 7"><path d="M0.500 0.800 L5 5.800 L9.500 0.800" fill="none" stroke="#606266" stroke-width="1.100"/></svg>
<div class="abs" style="left:1648px;top:16px;width:1px;height:20px;background:#dcdfe6"></div>
<svg class="abs" style="left:1670.700px;top:10px" width="24" height="26" viewBox="0 0 24 26"><path d="M7.500 6.500 A9.300 9.300 0 1 0 16.500 6.500" fill="none" stroke="#6a8fd0" stroke-width="1.200" stroke-linecap="round"/><path d="M12 3.500 V13" stroke="#6a8fd0" stroke-width="1.200" stroke-linecap="round"/></svg>
</div>
<div id="card"><div class="abs" style="left:1px;top:1px;width:1676px;height:788px">
<div class="lbl" style="left:19px;top:19px">标题</div>
<div class="inp" style="left:59px;top:20px;width:260px;color:#606266;padding-left:15px">福建地区</div>
<div class="inp" style="left:1000px;top:19px;width:256px"></div>
<div class="lbl" style="left:19px;top:70px">类别</div>
<div class="inp ph" style="left:59px;top:71px;width:260px;padding-left:16px">请选择</div>
<div class="lbl" style="left:1247px;top:70px">报价状态</div>
<div class="inp ph" style="left:1316px;top:71px;width:215px">请选择</div>
<svg class="abs" style="left:1508px;top:83px" width="12" height="8" viewBox="0 0 12 8"><path d="M1 1 L6 6.500 L11 1" fill="none" stroke="#c0c4cc" stroke-width="1.200"/></svg>
<div class="abs lk" style="left:1549px;top:121px;font-size:12px;line-height:32px;text-decoration:underline;white-space:nowrap">重置</div>
<div class="btn pri" style="left:1584px;top:121px;width:73px"><svg style="display:inline-block;vertical-align:-2px;margin-right:4px" width="12" height="12" viewBox="0 0 12 12"><circle cx="5.500" cy="5.500" r="4.300" fill="none" stroke="#fff" stroke-width="1.100"/><path d="M8.700 8.700 L11 11" stroke="#fff" stroke-width="1.100"/></svg>查询</div>
<div class="btn pri" style="left:19px;top:153px;width:97px">＋ 新增报价</div>
<div class="btn" style="left:126px;top:153px;width:80px">批量启用</div>
<div class="btn" style="left:216px;top:153px;width:80px">批量停用</div>
<div id="tbl" style="left:19px;top:205px">
<div class="abs" style="left:0;top:237px;width:1638px;height:49px;background:#eef6ff"></div>
<div class="hl" style="top:0px"></div>
<div class="hl" style="top:41px"></div>
<div class="hl" style="top:90px"></div>
<div class="hl" style="top:139px"></div>
<div class="hl" style="top:188px"></div>
<div class="hl" style="top:237px"></div>
<div class="hl" style="top:286px"></div>
<div class="hl" style="top:335px"></div>
<div class="hl" style="top:384px"></div>
<div class="hl" style="top:433px"></div>
<div class="hl" style="top:482px"></div>
<div class="hl" style="top:531px"></div>
<div class="vl" style="left:0px"></div>
<div class="vl" style="left:45px"></div>
<div class="vl" style="left:95px"></div>
<div class="vl" style="left:207px"></div>
<div class="vl" style="left:1213px"></div>
<div class="vl" style="left:1335px"></div>
<div class="vl" style="left:1457px"></div>
<div class="vl" style="left:1637px"></div>
<div class="cb" style="left:11px;top:13px"></div>
<div class="c h" style="left:126px;top:0">停用/启用</div>
<div class="c h" style="left:218px;top:0">报价标题</div>
<div class="c h" style="left:1224px;top:0">审核状态</div>
<div class="c h" style="left:1346px;top:0">排序</div>
<div class="c h" style="left:1468px;top:0">操作</div>
<div class="cb" style="left:11px;top:58px"></div>
<div class="c" style="left:56px;top:41px">1</div>
<div class="sw" style="left:132px;top:56px"></div>
<div class="c" style="left:217px;top:41px">【地区】福建地区厂家瓶片/瓶砖采购价参考</div>
<div class="c" style="left:1049px;top:41px;width:150px;text-align:right">2024-10-23 15:40:42</div>
<div class="c" style="left:1224px;top:41px">审核通过</div>
<div class="c" style="left:1346px;top:41px">2</div>
<div class="c lk" style="left:1468px;top:41px">重发<span style="margin-left:12px">编辑</span><span style="margin-left:12px">推送</span><span style="margin-left:12px">加入重发</span></div>
<div class="cb" style="left:11px;top:107px"></div>
<div class="c" style="left:56px;top:90px">2</div>
<div class="sw" style="left:132px;top:105px"></div>
<div class="c" style="left:217px;top:90px">【地区】福建地区厂家瓶片/瓶砖采购价参考</div>
<div class="c" style="left:1049px;top:90px;width:150px;text-align:right">2024-10-23 15:41:52</div>
<div class="c" style="left:1224px;top:90px">审核通过</div>
<div class="c" style="left:1346px;top:90px">2</div>
<div class="c lk" style="left:1468px;top:90px">重发<span style="margin-left:12px">编辑</span><span style="margin-left:12px">推送</span><span style="margin-left:12px">加入重发</span></div>
<div class="cb" style="left:11px;top:156px"></div>
<div class="c" style="left:56px;top:139px">3</div>
<div class="sw" style="left:132px;top:154px"></div>
<div class="c" style="left:217px;top:139px">【地区】福建地区厂家瓶片/瓶砖采购价参考</div>
<div class="c" style="left:1049px;top:139px;width:150px;text-align:right">2024-10-23 15:42:56</div>
<div class="c" style="left:1224px;top:139px">审核通过</div>
<div class="c" style="left:1346px;top:139px">2</div>
<div class="c lk" style="left:1468px;top:139px">重发<span style="margin-left:12px">编辑</span><span style="margin-left:12px">推送</span><span style="margin-left:12px">加入重发</span></div>
<div class="cb" style="left:11px;top:205px"></div>
<div class="c" style="left:56px;top:188px">4</div>
<div class="sw" style="left:132px;top:203px"></div>
<div class="c" style="left:217px;top:188px">【地区】福建地区厂家瓶片/瓶砖采购价参考</div>
<div class="c" style="left:1049px;top:188px;width:150px;text-align:right">2024-10-23 15:43:03</div>
<div class="c" style="left:1224px;top:188px">审核通过</div>
<div class="c" style="left:1346px;top:188px">2</div>
<div class="c lk" style="left:1468px;top:188px">重发<span style="margin-left:12px">编辑</span><span style="margin-left:12px">推送</span><span style="margin-left:12px">加入重发</span></div>
<div class="cb" style="left:11px;top:254px"></div>
<div class="c" style="left:56px;top:237px">5</div>
<div class="sw" style="left:132px;top:252px"></div>
<div class="c" style="left:217px;top:237px">【地区】福建地区厂家瓶片/瓶砖采购价参考</div>
<div class="c" style="left:1049px;top:237px;width:150px;text-align:right">2024-10-23 15:44:52</div>
<div class="c" style="left:1224px;top:237px">审核通过</div>
<div class="c" style="left:1346px;top:237px">1</div>
<div class="c lk" style="left:1468px;top:237px">重发<span style="margin-left:12px">编辑</span><span style="margin-left:12px">推送</span><span style="margin-left:12px">加入重发</span></div>
<div class="cb" style="left:11px;top:303px"></div>
<div class="c" style="left:56px;top:286px">6</div>
<div class="sw" style="left:132px;top:301px"></div>
<div class="c" style="left:217px;top:286px">【地区】福建地区厂家瓶片/瓶砖采购价参考</div>
<div class="c" style="left:1049px;top:286px;width:150px;text-align:right">2024-10-23 15:45:39</div>
<div class="c" style="left:1224px;top:286px">审核通过</div>
<div class="c" style="left:1346px;top:286px">2</div>
<div class="c lk" style="left:1468px;top:286px">重发<span style="margin-left:12px">编辑</span><span style="margin-left:12px">推送</span><span style="margin-left:12px">加入重发</span></div>
<div class="cb" style="left:11px;top:352px"></div>
<div class="c" style="left:56px;top:335px">7</div>
<div class="sw" style="left:132px;top:350px"></div>
<div class="c" style="left:217px;top:335px">【地区】福建地区厂家瓶片/瓶砖采购价参考</div>
<div class="c" style="left:1049px;top:335px;width:150px;text-align:right">2024-10-23 15:46:49</div>
<div class="c" style="left:1224px;top:335px">审核通过</div>
<div class="c" style="left:1346px;top:335px">2</div>
<div class="c lk" style="left:1468px;top:335px">重发<span style="margin-left:12px">编辑</span><span style="margin-left:12px">推送</span><span style="margin-left:12px">加入重发</span></div>
<div class="cb" style="left:11px;top:401px"></div>
<div class="c" style="left:56px;top:384px">8</div>
<div class="sw" style="left:132px;top:399px"></div>
<div class="c" style="left:217px;top:384px">【地区】福建地区厂家瓶片/瓶砖采购价参考</div>
<div class="c" style="left:1049px;top:384px;width:150px;text-align:right">2024-10-23 15:47:14</div>
<div class="c" style="left:1224px;top:384px">审核通过</div>
<div class="c" style="left:1346px;top:384px">2</div>
<div class="c lk" style="left:1468px;top:384px">重发<span style="margin-left:12px">编辑</span><span style="margin-left:12px">推送</span><span style="margin-left:12px">加入重发</span></div>
<div class="cb" style="left:11px;top:450px"></div>
<div class="c" style="left:56px;top:433px">9</div>
<div class="sw" style="left:132px;top:448px"></div>
<div class="c" style="left:217px;top:433px">【地区】福建地区厂家瓶片/瓶砖采购价参考</div>
<div class="c" style="left:1049px;top:433px;width:150px;text-align:right">2024-10-23 15:48:50</div>
<div class="c" style="left:1224px;top:433px">审核通过</div>
<div class="c" style="left:1346px;top:433px">2</div>
<div class="c lk" style="left:1468px;top:433px">重发<span style="margin-left:12px">编辑</span><span style="margin-left:12px">推送</span><span style="margin-left:12px">加入重发</span></div>
<div class="cb" style="left:11px;top:499px"></div>
<div class="c" style="left:56px;top:482px">10</div>
<div class="sw" style="left:132px;top:497px"></div>
<div class="c" style="left:217px;top:482px">【地区】福建地区厂家瓶片/瓶砖采购价参考</div>
<div class="c" style="left:1049px;top:482px;width:150px;text-align:right">2024-10-23 15:49:43</div>
<div class="c" style="left:1224px;top:482px">审核通过</div>
<div class="c" style="left:1346px;top:482px">2</div>
<div class="c lk" style="left:1468px;top:482px">重发<span style="margin-left:12px">编辑</span><span style="margin-left:12px">推送</span><span style="margin-left:12px">加入重发</span></div>
</div>
<div class="abs" style="left:23.500px;top:738.500px;font-size:13px;line-height:28px;color:#606266;white-space:nowrap">共 889 条</div>
<div class="inp" style="left:94.500px;top:739px;width:99.500px;height:28px;line-height:26px;font-size:13px;padding-left:18px;border-radius:3px">10条/页</div>
<svg class="abs" style="left:177px;top:750px" width="10" height="7" viewBox="0 0 10 7"><path d="M1 1 L5 5.500 L9 1" fill="none" stroke="#c0c4cc" stroke-width="1.100"/></svg>
<svg class="abs" style="left:220px;top:747px" width="8" height="12" viewBox="0 0 8 12"><path d="M6.500 1 L1.500 6 L6.500 11" fill="none" stroke="#c0c4cc" stroke-width="1.300"/></svg>
</div></div>
</div>
<div id="ovl"></div>
<!-- ================= modal ================= -->
<div id="modal">
<div class="lbl" style="left:32px;top:47px">厂家电话</div>
<div class="inp ph" style="left:100px;top:48px;width:376px">请选择</div>
<svg class="abs" style="left:452px;top:60px" width="12" height="8" viewBox="0 0 12 8"><path d="M1 1 L6 6.500 L11 1" fill="none" stroke="#c0c4cc" stroke-width="1.200"/></svg>
<div class="lbl" style="left:515px;top:47px">排序</div>
<div class="inp" style="left:556px;top:48px;width:375px">1</div>
<div class="btn pri" style="left:20px;top:98px;width:56px">保存</div>
<div class="btn" style="left:86px;top:98px;width:59px">取 消</div>
<div class="lbl" style="left:22px;top:148px"><span style="color:#f56c6c;margin-right:4px">*</span>分享标题</div>
<div class="inp dis" style="left:100px;top:149px;width:376px">【地区】福建地区厂家瓶片/瓶砖采购价参考</div>
<div class="lbl" style="left:487px;top:148px">分享描述</div>
<div class="inp" style="left:556px;top:149px;width:375px">【地区】福建地区再生PET市场价格参考</div>
<div id="ql" style="left:35px;top:231px">
<div id="qtb">
<svg class="qb" style="left:13px;top:11px" viewBox="0 0 18 18"><path class="s" d="M5,4H9.500A2.500,2.500,0,0,1,12,6.500v0A2.500,2.500,0,0,1,9.500,9H5A0,0,0,0,1,5,9V4A0,0,0,0,1,5,4Z"/><path class="s" d="M5,9h5.500A2.500,2.500,0,0,1,13,11.500v0A2.500,2.500,0,0,1,10.500,14H5a0,0,0,0,1,0,0V9A0,0,0,0,1,5,9Z"/></svg>
<svg class="qb" style="left:41px;top:11px" viewBox="0 0 18 18"><line class="s" x1="7" x2="13" y1="4" y2="4"/><line class="s" x1="5" x2="11" y1="14" y2="14"/><line class="s" x1="8" x2="10" y1="14" y2="4"/></svg>
<svg class="qb" style="left:69px;top:11px" viewBox="0 0 18 18"><path class="s" d="M5,3V9a4.012,4.012,0,0,0,4,4H9a4.012,4.012,0,0,0,4-4V3"/><rect class="f" height="1" rx="0.500" ry="0.500" width="12" x="3" y="15"/></svg>
<svg class="qb" style="left:97px;top:11px" viewBox="0 0 18 18"><line class="s th" x1="15.500" x2="2.500" y1="8.500" y2="9.500"/><path class="f" d="M9.007,8C6.542,7.791,6,7.519,6,6.500,6,5.792,7.283,5,9,5c1.571,0,2.765.679,2.969,1.309a1,1,0,0,0,1.900-.617C13.356,4.106,11.354,3,9,3,6.200,3,4,4.538,4,6.500a3.200,3.200,0,0,0,.500,1.843Z"/><path class="f" d="M8.984,10C11.457,10.208,12,10.479,12,11.500c0,0.708-1.283,1.500-3,1.500-1.571,0-2.765-.679-2.969-1.309a1,1,0,1,0-1.900.617C4.644,13.894,6.646,15,9,15c2.800,0,5-1.538,5-3.500a3.200,3.200,0,0,0-.500-1.843Z"/></svg>
<svg class="qb" style="left:140px;top:11px" viewBox="0 0 18 18"><rect class="sf" height="3" width="3" x="4" y="5"/><rect class="sf" height="3" width="3" x="11" y="5"/><path class="sf ev" d="M7,8c0,4.031-3,5-3,5"/><path class="sf ev" d="M14,8c0,4.031-3,5-3,5"/></svg>
<svg class="qb" style="left:168px;top:11px" viewBox="0 0 18 18"><polyline class="s ev" points="5 7 3 9 5 11"/><polyline class="s ev" points="13 7 15 9 13 11"/><line class="s" x1="10" x2="8" y1="5" y2="13"/></svg>
<svg class="qb" style="left:211px;top:11px" viewBox="0 0 18 18"><path class="f" d="M10,4V14a1,1,0,0,1-2,0V10H3v4a1,1,0,0,1-2,0V4A1,1,0,0,1,3,4V8H8V4a1,1,0,0,1,2,0Zm6.068,9.209H14.990V7.599a.541.541,0,0,0-.605-.605h-.627a1.011,1.011,0,0,0-.748.297L11.645,8.566a.544.544,0,0,0-.022.858l.286.308a.539.539,0,0,0,.847.033l.099-.088a1.214,1.214,0,0,0,.242-.353h.022s-.011.309-.011.605V13.209H12.041a.541.541,0,0,0-.605.605v.439a.541.541,0,0,0,.605.605h4.027a.541.541,0,0,0,.605-.605v-.439A.541.541,0,0,0,16.068,13.209Z"/></svg>
<svg class="qb" style="left:239px;top:11px" viewBox="0 0 18 18"><path class="f" d="M16.740,13.814v.439a.541.541,0,0,1-.605.605H11.855a.584.584,0,0,1-.649-.605V14.013c0-2.905,3.399-3.422,3.399-4.555a.777.777,0,0,0-.847-.781,1.177,1.177,0,0,0-.836.385c-.275.264-.561.374-.858.132l-.429-.341c-.308-.242-.385-.518-.154-.814a2.972,2.972,0,0,1,2.454-1.177,2.454,2.454,0,0,1,2.684,2.409c0,2.453-3.179,2.927-3.278,3.938h2.794A.541.541,0,0,1,16.740,13.814ZM9,3A1,1,0,0,0,8,4V8H3V4A1,1,0,0,0,1,4V14a1,1,0,0,0,2,0V10H8v4a1,1,0,0,0,2,0V4A1,1,0,0,0,9,3Z"/></svg>
<svg class="qb" style="left:282px;top:11px" viewBox="0 0 18 18"><line class="s" x1="7" x2="15" y1="4" y2="4"/><line class="s" x1="7" x2="15" y1="9" y2="9"/><line class="s" x1="7" x2="15" y1="14" y2="14"/><line class="s th" x1="2.500" x2="4.500" y1="5.500" y2="5.500"/><path class="f" d="M3.500,6A0.500,0.500,0,0,1,3,5.500V3.085l-0.276.138A0.500,0.500,0,0,1,2.053,3c-0.124-.247-0.023-0.324.224-0.447l1-.500A0.500,0.500,0,0,1,4,2.500v3A0.500,0.500,0,0,1,3.500,6Z"/><path class="s th" d="M4.500,10.500h-2c0-.234,1.850-1.076,1.850-2.234A0.959,0.959,0,0,0,2.500,8.156"/><path class="s th" d="M2.500,14.846a0.959,0.959,0,0,0,1.850-.109A0.700,0.700,0,0,0,3.750,14a0.688,0.688,0,0,0,.600-0.736,0.959,0.959,0,0,0-1.850-.109"/></svg>
<svg class="qb" style="left:310px;top:11px" viewBox="0 0 18 18"><line class="s" x1="6" x2="15" y1="4" y2="4"/><line class="s" x1="6" x2="15" y1="9" y2="9"/><line class="s" x1="6" x2="15" y1="14" y2="14"/><line class="s" x1="3" x2="3" y1="4" y2="4"/><line class="s" x1="3" x2="3" y1="9" y2="9"/><line class="s" x1="3" x2="3" y1="14" y2="14"/></svg>
<svg class="qb" style="left:353px;top:11px" viewBox="0 0 18 18"><path class="f" d="M15.500,15H13.861a3.858,3.858,0,0,0,1.914-2.975,1.800,1.800,0,0,0-1.600-1.751A1.921,1.921,0,0,0,12.021,11.700a0.500,0.500,0,1,0,.957.291h0a0.914,0.914,0,0,1,1.053-.725,0.810,0.810,0,0,1,.744.762c0,1.076-1.170,1.870-1.940,2.431A1.456,1.456,0,0,0,12,15.500a0.500,0.500,0,0,0,.500.500h3A0.500,0.500,0,0,0,15.500,15Z"/><path class="f" d="M9.650,5.241a1,1,0,0,0-1.409.108L6,7.964,3.759,5.349A1,1,0,0,0,2.192,6.592Q2.215,6.621,2.241,6.649L4.684,9.500,2.241,12.350A1,1,0,0,0,3.710,13.707q0.026-.028.049-0.057L6,11.036,8.241,13.650a1,1,0,1,0,1.567-1.243Q9.785,12.378,9.759,12.350L7.316,9.500,9.759,6.651A1,1,0,0,0,9.650,5.241Z"/></svg>
<svg class="qb" style="left:381px;top:11px" viewBox="0 0 18 18"><path class="f" d="M15.500,7H13.861a4.015,4.015,0,0,0,1.914-2.975,1.800,1.800,0,0,0-1.600-1.751A1.922,1.922,0,0,0,12.021,3.700a0.500,0.500,0,1,0,.957.291,0.917,0.917,0,0,1,1.053-.725,0.810,0.810,0,0,1,.744.762c0,1.077-1.164,1.925-1.934,2.486A1.423,1.423,0,0,0,12,7.500a0.500,0.500,0,0,0,.500.500h3A0.500,0.500,0,0,0,15.500,7Z"/><path class="f" d="M9.651,5.241a1,1,0,0,0-1.410.108L6,7.964,3.759,5.349a1,1,0,1,0-1.519,1.300L4.683,9.500,2.241,12.350a1,1,0,1,0,1.519,1.300L6,11.036,8.241,13.650a1,1,0,0,0,1.519-1.300L7.317,9.500,9.759,6.651A1,1,0,0,0,9.651,5.241Z"/></svg>
<svg class="qb" style="left:424px;top:11px" viewBox="0 0 18 18"><line class="s" x1="3" x2="15" y1="14" y2="14"/><line class="s" x1="3" x2="15" y1="4" y2="4"/><line class="s" x1="9" x2="15" y1="9" y2="9"/><polyline class="s" points="5 7 5 11 3 9 5 7"/></svg>
<svg class="qb" style="left:452px;top:11px" viewBox="0 0 18 18"><line class="s" x1="3" x2="15" y1="14" y2="14"/><line class="s" x1="3" x2="15" y1="4" y2="4"/><line class="s" x1="9" x2="15" y1="9" y2="9"/><polyline class="sf" points="3 7 3 11 5 9 3 7"/></svg>
<svg class="qb" style="left:495px;top:11px" viewBox="0 0 18 18"><polygon class="sf" points="3 11 5 9 3 7 3 11"/><line class="sf" x1="15" x2="11" y1="4" y2="4"/><path class="f" d="M11,3a3,3,0,0,0,0,6h1V3H11Z"/><rect class="f" height="11" width="1" x="11" y="4"/><rect class="f" height="11" width="1" x="13" y="4"/></svg>
<div class="qp" style="left:542px;top:8px">Normal</div>
<svg class="qb" style="left:612px;top:11px" viewBox="0 0 18 18"><polygon class="s" points="7 11 9 13 11 11 7 11"/><polygon class="s" points="7 7 9 5 11 7 7 7"/></svg>
<div class="qp" style="left:655px;top:8px">Normal</div>
<svg class="qb" style="left:725px;top:11px" viewBox="0 0 18 18"><polygon class="s" points="7 11 9 13 11 11 7 11"/><polygon class="s" points="7 7 9 5 11 7 7 7"/></svg>
<div class="qp" style="left:17px;top:32px">Sans Serif</div>
<svg class="qb" style="left:97px;top:35px" viewBox="0 0 18 18"><polygon class="s" points="7 11 9 13 11 11 7 11"/><polygon class="s" points="7 7 9 5 11 7 7 7"/></svg>
<svg class="qb" style="left:136px;top:35px" viewBox="0 0 18 18"><line class="s" style="opacity:.4" x1="3" x2="15" y1="15" y2="15"/><polyline class="s" points="5.500 11 9 3 12.500 11"/><line class="s" x1="11.630" x2="6.380" y1="9" y2="9"/></svg>
<svg class="qb" style="left:164px;top:35px" viewBox="0 0 18 18"><rect class="f" x="2" y="3" width="1" height="1"/><rect class="f" x="2" y="6" width="1" height="1"/><rect class="f" x="2" y="9" width="1" height="1"/><rect class="f" x="2" y="12" width="1" height="1"/><rect class="f" x="2" y="15" width="1" height="1"/><rect class="f" x="3" y="2" width="1" height="1"/><rect class="f" x="3" y="5" width="1" height="1"/><rect class="f" x="3" y="8" width="1" height="1"/><rect class="f" x="3" y="11" width="1" height="1"/><rect class="f" x="3" y="14" width="1" height="1"/><rect class="f" x="4" y="4" width="1" height="1"/><rect class="f" x="4" y="7" width="1" height="1"/><rect class="f" x="4" y="10" width="1" height="1"/><rect class="f" x="5" y="3" width="1" height="1"/><rect class="f" x="5" y="6" width="1" height="1"/><rect class="f" x="5" y="15" width="1" height="1"/><rect class="f" x="6" y="2" width="1" height="1"/><rect class="f" x="6" y="5" width="1" height="1"/><rect class="f" x="6" y="14" width="1" height="1"/><rect class="f" x="8" y="3" width="1" height="1"/><rect class="f" x="8" y="15" width="1" height="1"/><rect class="f" x="9" y="2" width="1" height="1"/><rect class="f" x="9" y="14" width="1" height="1"/><rect class="f" x="11" y="3" width="1" height="1"/><rect class="f" x="11" y="15" width="1" height="1"/><rect class="f" x="12" y="2" width="1" height="1"/><rect class="f" x="12" y="5" width="1" height="1"/><rect class="f" x="12" y="8" width="1" height="1"/><rect class="f" x="12" y="14" width="1" height="1"/><rect class="f" x="13" y="4" width="1" height="1"/><rect class="f" x="13" y="7" width="1" height="1"/><rect class="f" x="13" y="10" width="1" height="1"/><rect class="f" x="14" y="3" width="1" height="1"/><rect class="f" x="14" y="6" width="1" height="1"/><rect class="f" x="14" y="9" width="1" height="1"/><rect class="f" x="14" y="12" width="1" height="1"/><rect class="f" x="14" y="15" width="1" height="1"/><rect class="f" x="15" y="2" width="1" height="1"/><rect class="f" x="15" y="5" width="1" height="1"/><rect class="f" x="15" y="8" width="1" height="1"/><rect class="f" x="15" y="11" width="1" height="1"/><rect class="f" x="15" y="14" width="1" height="1"/><polyline class="s" points="5.500 13 9 5 12.500 13"/><line class="s" x1="11.630" x2="6.380" y1="11" y2="11"/></svg>
<svg class="qb" style="left:207px;top:35px" viewBox="0 0 18 18"><line class="s" x1="3" x2="15" y1="9" y2="9"/><line class="s" x1="3" x2="13" y1="14" y2="14"/><line class="s" x1="3" x2="9" y1="4" y2="4"/></svg>
<svg class="qb" style="left:250px;top:35px" viewBox="0 0 18 18"><line class="s" x1="5" x2="13" y1="3" y2="3"/><line class="s" x1="6" x2="9.350" y1="12" y2="3"/><line class="s" x1="11" x2="15" y1="11" y2="15"/><line class="s" x1="15" x2="11" y1="11" y2="15"/><rect class="f" height="1" rx="0.500" ry="0.500" width="7" x="2" y="14"/></svg>
<svg class="qb" style="left:293px;top:35px" viewBox="0 0 18 18"><line class="s" x1="7" x2="11" y1="7" y2="11"/><path class="s ev" d="M8.900,4.577a3.476,3.476,0,0,1,.360,4.679A3.476,3.476,0,0,1,4.577,8.900C3.185,7.500,2.035,6.400,4.217,4.217S7.500,3.185,8.900,4.577Z"/><path class="s ev" d="M13.423,9.100a3.476,3.476,0,0,0-4.679-.360,3.476,3.476,0,0,0,.360,4.679c1.392,1.392,2.500,2.542,4.679.360S14.815,10.500,13.423,9.100Z"/></svg>
<svg class="qb" style="left:321px;top:35px" viewBox="0 0 18 18"><rect class="s" height="10" width="12" x="3" y="4"/><circle class="f" cx="6" cy="7" r="1"/><polyline class="f ev" points="5 12 5 11 7 9 8 10 11 7 13 9 13 12 5 12"/></svg>
<svg class="qb" style="left:349px;top:35px" viewBox="0 0 18 18"><rect class="s" height="12" width="12" x="3" y="3"/><rect class="f" height="12" width="1" x="5" y="3"/><rect class="f" height="12" width="1" x="12" y="3"/><rect class="f" height="2" width="8" x="5" y="8"/><rect class="f" height="1" width="3" x="3" y="5"/><rect class="f" height="1" width="3" x="3" y="7"/><rect class="f" height="1" width="3" x="3" y="10"/><rect class="f" height="1" width="3" x="3" y="12"/><rect class="f" height="1" width="3" x="12" y="5"/><rect class="f" height="1" width="3" x="12" y="7"/><rect class="f" height="1" width="3" x="12" y="10"/><rect class="f" height="1" width="3" x="12" y="12"/></svg>
</div>
<div id="qed">
<div id="et">
<div class="bg" style="left:0;top:0;width:831px;height:31px"></div>
<div class="bg" style="left:0;top:51px;width:831px;height:297px"></div>
<div class="bl" style="left:0.2px;top:0px;width:1.8px;height:640px"></div>
<div class="bl" style="left:830px;top:0px;width:2px;height:640px;background:#44484e"></div>
<div class="bl" style="left:222.05px;top:0px;width:2.8px;height:31px"></div>
<div class="bl" style="left:222.05px;top:51px;width:2.8px;height:589px"></div>
<div class="bl" style="left:286.4px;top:0px;width:2.8px;height:31px"></div>
<div class="bl" style="left:286.4px;top:51px;width:2.8px;height:589px"></div>
<div class="bl" style="left:397px;top:0px;width:2.8px;height:31px"></div>
<div class="bl" style="left:397px;top:51px;width:2.8px;height:589px"></div>
<div class="bl" style="left:487.6px;top:0px;width:2.8px;height:31px"></div>
<div class="bl" style="left:487.6px;top:51px;width:2.8px;height:589px"></div>
<div class="bl" style="left:0px;top:0px;width:832px;height:2.2px"></div>
<div class="bl" style="left:0px;top:29.9px;width:832px;height:2.8px"></div>
<div class="bl" style="left:0px;top:50.3px;width:832px;height:2.5px"></div>
<div class="bl" style="left:0px;top:347px;width:832px;height:2px"></div>
<div class="bl" style="left:288px;top:441.4px;width:542px;height:1px;background:#2a2a2a"></div>
<div class="bl" style="left:288px;top:536.4px;width:542px;height:1px;background:#2a2a2a"></div>
<div class="abs" style="left:2px;top:32.7px;width:0;height:0;border-top:3px solid #1a8a1a;border-right:3px solid transparent"></div>
<div class="abs" style="left:2px;top:52.8px;width:0;height:0;border-top:3px solid #1a8a1a;border-right:3px solid transparent"></div>
<div class="abs" style="left:490.4px;top:52.8px;width:0;height:0;border-top:3px solid #1a8a1a;border-right:3px solid transparent"></div>
<div class="abs" style="left:2px;top:349px;width:0;height:0;border-top:3px solid #1a8a1a;border-right:3px solid transparent"></div>
<div class="hd" style="left:61.5px;top:6.6px;height:20px;line-height:20px;width:100px;text-align:center;font-weight:500;font-size:15px;letter-spacing:0;-webkit-text-stroke:.2px #000;">厂家</div>
<div class="hd" style="left:205.3px;top:6.6px;height:20px;line-height:20px;width:100px;text-align:center;font-weight:500;font-size:15px;letter-spacing:0;-webkit-text-stroke:.2px #000;">种类</div>
<div class="hd" style="left:293.3px;top:6.6px;height:20px;line-height:20px;width:100px;text-align:center;font-weight:500;font-size:15px;letter-spacing:0;-webkit-text-stroke:.2px #000;">品名</div>
<div class="hd" style="left:393.3px;top:6.6px;height:20px;line-height:20px;width:100px;text-align:center;font-weight:500;font-size:15px;letter-spacing:0;-webkit-text-stroke:.2px #000;">价格</div>
<div class="hd" style="left:610.0px;top:6.6px;height:20px;line-height:20px;width:100px;text-align:center;font-weight:500;font-size:15px;letter-spacing:0;-webkit-text-stroke:.2px #000;">描述</div>
<div class="hd" style="left:629px;top:32.3px;height:20px;line-height:20px;width:200px;text-align:right;font-weight:500;font-size:15px;letter-spacing:0;-webkit-text-stroke:.2px #000;letter-spacing:.6px;">单位：元/吨</div>
<div class="ss" style="left:1.6px;top:152.4px;height:20px;line-height:20px;width:220px;text-align:center;font-weight:500;font-size:15.6px;">福建泉州灿华</div>
<div class="ss" style="left:1.6px;top:191.9px;height:20px;line-height:20px;width:220px;text-align:center;font-weight:500;font-size:15.6px;">联系人：宋经理</div>
<div class="ss" style="left:1.6px;top:211.7px;height:20px;line-height:20px;width:220px;text-align:center;font-weight:500;font-size:15.6px;">联系方式：<b>15906036767</b></div>
<div class="ss" style="left:225.3px;top:191.6px;height:20px;line-height:20px;width:60px;text-align:center;font-weight:500;font-size:15.6px;">瓶砖</div>
<div class="ss" style="left:293.3px;top:191.6px;height:20px;line-height:20px;width:100px;text-align:center;font-weight:500;font-size:15.6px;">三色瓶砖</div>
<div class="sf" style="left:403.6px;top:191.6px;height:20px;line-height:20px;width:80px;text-align:center;font-size:16px;letter-spacing:1.1px;font-weight:400;-webkit-text-stroke:.45px #000;">4350</div>
<div class="sf" style="left:493.3px;top:53.5px;height:20px;line-height:20px;font-size:16.2px;">每月需求量<span style="letter-spacing:.55px">19000</span>吨</div>
<div class="sf" style="left:493.3px;top:73.85px;height:20px;line-height:20px;font-size:16.2px;">（白兰绿三色+油壶一起压包，其他颜色不要压</div>
<div class="sf" style="left:493.3px;top:94.2px;height:20px;line-height:20px;font-size:16.2px;">在大货里)</div>
<div class="sf" style="left:493.3px;top:134.9px;height:20px;line-height:20px;font-size:16.2px;">以下品类不能打进去：</div>
<div class="sf" style="left:493.3px;top:155.25px;height:20px;line-height:20px;font-size:16.2px;">五粮液盒、乳白色、乐虎瓶、咖啡色、医疗瓶</div>
<div class="sf" style="left:493.3px;top:175.6px;height:20px;line-height:20px;font-size:16.2px;">、酒精消毒液瓶，农药瓶、再生瓶、瓶子里装</div>
<div class="sf" style="left:493.3px;top:195.95px;height:20px;line-height:20px;font-size:16.2px;">有固体或者油漆、胶水、吸塑片等等，这些都</div>
<div class="sf" style="left:493.3px;top:216.3px;height:20px;line-height:20px;font-size:16.2px;">不能有。</div>
<div class="sf" style="left:493.3px;top:236.65px;height:20px;line-height:20px;font-size:16.2px;">油壶比例<span style="letter-spacing:.55px">10%</span></div>
<div class="sf" style="left:493.3px;top:277.35px;height:20px;line-height:20px;font-size:16.2px;">送到价格，水份保留<span style="letter-spacing:.55px">7</span>个点。</div>
<div class="sf" style="left:493.3px;top:297.7px;height:20px;line-height:20px;font-size:16.2px;">检测后，按质量标准出结算单，然后你去开普</div>
<div class="sf" style="left:493.3px;top:318.05px;height:20px;line-height:20px;font-size:16.2px;">通增值税发票，我们收到票后付款。</div>
<div class="sf" style="left:1.3px;top:503.4px;height:20px;line-height:20px;width:220px;text-align:center;font-size:16.1px;">福建尤溪华扬纤纺</div>
<div class="sf" style="left:1.8px;top:523.5px;height:20px;line-height:20px;width:220px;text-align:center;font-size:16.1px;">联系人：陈经理</div>
<div class="sf" style="left:2.6px;top:544.1px;height:20px;line-height:20px;width:220px;text-align:center;font-size:16.1px;">联系方式：<span style="letter-spacing:.85px">13635288853</span></div>
<div class="bl" style="left:241.8px;top:490.6px;width:1.7px;height:1.7px;background:#111"></div>
<div class="sf" style="left:288.3px;top:386.9px;height:20px;line-height:20px;width:110px;text-align:center;font-size:16px;font-weight:600;">三色瓶砖<span style="font-size:14px;letter-spacing:-1px;margin-right:1px">A</span>级</div>
<div class="ss" style="left:403.6px;top:386.9px;height:20px;line-height:20px;width:80px;text-align:center;font-size:15.7px;">4300</div>
<div class="sf" style="left:288.3px;top:481.5px;height:20px;line-height:20px;width:110px;text-align:center;font-size:16px;font-weight:600;">三色瓶砖<span style="font-size:14px;letter-spacing:-1px;margin-right:1px">B</span>级</div>
<div class="ss" style="left:403.6px;top:481.5px;height:20px;line-height:20px;width:80px;text-align:center;font-size:15.7px;">4200</div>
<div class="ss" style="left:492.4px;top:367.3px;height:20px;line-height:20px;font-size:15.4px;">质量验收标准: 含少量乳白、铝口瓶、五粮液盒、</div>
<div class="ss" style="left:492.4px;top:387.05px;height:20px;line-height:20px;font-size:15.4px;">杂色瓶非<span style="letter-spacing:-.85px">PET</span>类瓶<span style="letter-spacing:-.85px">(PP.PE)</span>不含油壶，白瓶比例高于</div>
<div class="ss" style="left:492.4px;top:406.8px;height:20px;line-height:20px;font-size:15.4px;"><span style="letter-spacing:-.85px">55%</span>，城市瓶源、无泥沙、老化瓶。</div>
<div class="ss" style="left:492.4px;top:461.8px;height:20px;line-height:20px;font-size:15.4px;">质量验收标准: 含少量乳白、铝口瓶、五粮液盒、</div>
<div class="ss" style="left:492.4px;top:481.55px;height:20px;line-height:20px;font-size:15.4px;">杂色瓶非<span style="letter-spacing:-.85px">PET</span>类瓶<span style="letter-spacing:-.85px">(PP.PE)</span>油壶含量低于<span style="letter-spacing:-.85px">10%</span>，白瓶</div>
<div class="ss" style="left:492.4px;top:501.3px;height:20px;line-height:20px;font-size:15.4px;">比例高于<span style="letter-spacing:-.85px">55%</span>，城市瓶源、无泥沙、老化瓶。</div>
<div class="ss" style="left:492.4px;top:556.3px;height:20px;line-height:20px;font-size:15.4px;">质量验收标准: 含少量乳白、铝口瓶、五粮液盒、</div>
<div class="ss" style="left:492.4px;top:576.05px;height:20px;line-height:20px;font-size:15.4px;">杂色瓶非<span style="letter-spacing:-.85px">PET</span>类瓶<span style="letter-spacing:-.85px">(PP.PE)</span>油壶含量低于<span style="letter-spacing:-.85px">20%</span>，白瓶</div>
<div class="ss" style="left:492.4px;top:595.8px;height:20px;line-height:20px;font-size:15.4px;">比例高于<span style="letter-spacing:-.85px">55%</span>，城市瓶源、无泥沙、老化瓶。</div>
</div>
<div class="abs" style="left:862px;top:0;width:17px;height:575px;background:#f1f1f1"></div>
<svg class="abs" style="left:867px;top:7px" width="7" height="4" viewBox="0 0 7 4"><path d="M0 4 L3.500 0 L7 4Z" fill="#505050"/></svg>
<svg class="abs" style="left:867px;top:564px" width="7" height="4" viewBox="0 0 7 4"><path d="M0 0 L3.500 4 L7 0Z" fill="#505050"/></svg>
<div class="abs" style="left:864px;top:21px;width:13px;height:225px;background:#c1c1c1"></div>

</div>
</div>
</div>
</div><!-- /page -->
<!-- page scrollbar -->
<div id="sbar">
  <svg class="abs" style="left:5px;top:7px" width="7" height="4" viewBox="0 0 7 4"><path d="M0 4 L3.500 0 L7 4Z" fill="#505050"/></svg>
  <div class="abs" style="left:2px;top:361px;width:13px;height:556px;background:#c1c1c1"></div>
  <svg class="abs" style="left:5px;top:923px" width="7" height="4" viewBox="0 0 7 4"><path d="M0 0 L3.500 4 L7 0Z" fill="#a3a3a3"/></svg>
</div>
<!-- blue thermometer -->
<div class="abs" style="left:1909px;top:805px;width:7px;height:48px;background:#5b6770;border-radius:3px"></div>
<div class="abs" style="left:1911px;top:826px;width:4px;height:26px;background:#29a9e8"></div>
<div class="abs" style="left:1907px;top:847px;width:12px;height:12px;border-radius:6px;background:#29a9e8;border:1px solid #5b6770"></div>
<div id="winline"></div>
<div id="task">
  <!-- start -->
  <svg class="abs" style="left:16px;top:11px" width="17" height="17" viewBox="0 0 17 17"><path d="M0 2.300 L7 1.300 V8 H0Z M8 1.200 L17 0 V8 H8Z M0 9 H7 V15.700 L0 14.700Z M8 9 H17 V17 L8 15.800Z" fill="#fff"/></svg>
  <!-- wechat active -->
  <div class="abs" style="left:51px;top:0;width:48px;height:40px;background:#b06a31"></div>
  <div class="abs" style="left:51px;top:38px;width:48px;height:2px;background:#ff8a1c"></div>
  <div class="abs" style="left:95px;top:0;width:4px;height:38px;background:#9c5c28"></div>
  <svg class="abs" style="left:62px;top:9px" width="26" height="22" viewBox="0 0 26 22"><ellipse cx="10" cy="8.500" rx="9.500" ry="8" fill="#2dc84d"/><path d="M4.500 14.500 L3.500 18.500 L8.500 16Z" fill="#2dc84d"/><circle cx="6.700" cy="6.300" r="1.200" fill="#1a8f35"/><circle cx="13" cy="6.300" r="1.200" fill="#1a8f35"/><ellipse cx="18" cy="14.500" rx="7.500" ry="6.300" fill="#e6e6e6"/><path d="M21.500 19.500 L23 22 L18.500 20.500Z" fill="#e6e6e6"/><circle cx="15.500" cy="12.800" r="1" fill="#9a9a9a"/><circle cx="20.500" cy="12.800" r="1" fill="#9a9a9a"/></svg>
  <!-- wps -->
  <svg class="abs" style="left:111px;top:10px" width="26" height="20" viewBox="0 0 26 20"><path d="M0 1 H6 L9 12 L12.500 1 H16 L19 12 L21.500 1 H26 L21.500 19 H16.500 L14 10 L11 19 H6Z" fill="#e8311c"/><path d="M6 1 L9 12 L11 19 H6 L0 1Z" fill="#ff5a3c" opacity=".6"/></svg>
  <div class="abs" style="left:104px;top:38px;width:32px;height:2px;background:#a9d3f3"></div><div class="abs" style="left:136px;top:38px;width:8px;height:2px;background:#7fa9cf"></div>
  <!-- screen chat -->
  <svg class="abs" style="left:162px;top:10px" width="24" height="21" viewBox="0 0 24 21"><path d="M1 1 H20 V8" fill="none" stroke="#22c55e" stroke-width="2"/><path d="M1 1 V16 H11" fill="none" stroke="#22c55e" stroke-width="2"/><rect x="0" y="0" width="21" height="3" fill="#22c55e"/><ellipse cx="17.500" cy="14.500" rx="6.300" ry="5.300" fill="#d8d8d8"/><path d="M20 18.500 L21.500 21 L17 19.500Z" fill="#d8d8d8"/><circle cx="15.500" cy="13.500" r=".9" fill="#888"/><circle cx="19.500" cy="13.500" r=".9" fill="#888"/></svg>
  <div class="abs" style="left:153px;top:38px;width:40px;height:2px;background:#a9d3f3"></div>
  <!-- 360 browser active -->
  <div class="abs" style="left:198px;top:0;width:45px;height:40px;background:linear-gradient(90deg,#525f5d,#5b6664)"></div>
  <div class="abs" style="left:242px;top:0;width:1px;height:40px;background:#2a3333"></div><div class="abs" style="left:243px;top:0;width:3px;height:40px;background:#465352"></div>
  <svg class="abs" style="left:209px;top:7px" width="26" height="26" viewBox="0 0 26 26"><circle cx="13" cy="13" r="11.400" fill="#f6f6f6"/><path d="M7 13.300 H19.300 A6.300 6.300 0 1 0 17.300 17.600" fill="none" stroke="#4cc02a" stroke-width="3.600"/><path d="M4.500 22.500 C3.500 17 9 6 20.500 1.500 C18 3 12 7 7.500 15 C6 18 5.500 20.500 6 23Z" fill="#4cc02a"/></svg>
  <div class="abs" style="left:198px;top:38px;width:48px;height:2px;background:#a9d3f3"></div>
  <!-- blue bird -->
  <svg class="abs" style="left:260px;top:9px" width="22" height="22" viewBox="0 0 22 22"><rect width="22" height="22" rx="4.500" fill="#0b7bf0"/><path d="M6 4 C10 5 15 8 16 12 L13.500 13 L15 14 L10 19 L11 15 L8.500 14 C9.500 13 10 12 10 11 C8 10 6.500 7 6 4Z" fill="#fff"/></svg>
  <div class="abs" style="left:251px;top:38px;width:32px;height:2px;background:#a9d3f3"></div><div class="abs" style="left:283px;top:38px;width:8px;height:2px;background:#7fa9cf"></div>
  <!-- folder -->
  <svg class="abs" style="left:308px;top:10px" width="24" height="20" viewBox="0 0 24 20"><path d="M1 1 H8 L10 3 H23 V18 H1Z" fill="#f7c64a"/><path d="M1 5 H23 V18 H1Z" fill="#ffd866"/><rect x="7" y="11" width="10" height="7" fill="#3b8fe0"/><rect x="9.500" y="14" width="5" height="4" fill="#ffd866"/></svg>
  <div class="abs" style="left:300px;top:38px;width:40px;height:2px;background:#a9d3f3"></div>
  <!-- tray -->
  <svg class="abs" style="left:1453px;top:13px" width="14" height="14" viewBox="0 0 22 22"><rect width="22" height="22" rx="4.500" fill="#0b7bf0"/><path d="M6 4 C10 5 15 8 16 12 L13.500 13 L15 14 L10 19 L11 15 L8.500 14 C9.500 13 10 12 10 11 C8 10 6.500 7 6 4Z" fill="#fff"/></svg>
  <svg class="abs" style="left:1476px;top:12px" width="16" height="16" viewBox="0 0 16 16"><rect width="16" height="16" rx="3" fill="#1e7bf2"/><path d="M3 7 C5 5 6.500 8.500 8.500 10.500 C10.500 12 12.500 10 12.500 7.500 V4 M10.500 5.500 L12.500 3.500 L14 5.500" fill="none" stroke="#fff" stroke-width="1.400"/></svg>

  <svg class="abs" style="left:1524px;top:12px" width="17" height="16" viewBox="0 0 26 22"><ellipse cx="10" cy="8.500" rx="9.500" ry="8" fill="#2dc84d"/><path d="M4.500 14.500 L3.500 18.500 L8.500 16Z" fill="#2dc84d"/><ellipse cx="18" cy="14.500" rx="7.500" ry="6.300" fill="#e6e6e6"/><path d="M21.500 19.500 L23 22 L18.500 20.500Z" fill="#e6e6e6"/></svg>
  <svg class="abs" style="left:1547px;top:13px" width="18" height="13" viewBox="0 0 18 13"><path d="M4.500 13 A4 4 0 0 1 4 5 A5.500 5.500 0 0 1 14 4.500 A4.300 4.300 0 0 1 14 13Z" fill="#1e90f5"/><path d="M9 13 A3.500 3.500 0 0 1 9 6.500 A4 4 0 0 1 16 7 A3.200 3.200 0 0 1 15 13Z" fill="#5cb6ff"/></svg>
  <svg class="abs" style="left:1572px;top:12px" width="17" height="16" viewBox="0 0 26 22"><ellipse cx="10" cy="8.500" rx="9.500" ry="8" fill="#2dc84d"/><path d="M4.500 14.500 L3.500 18.500 L8.500 16Z" fill="#2dc84d"/><ellipse cx="18" cy="14.500" rx="7.500" ry="6.300" fill="#e6e6e6"/><path d="M21.500 19.500 L23 22 L18.500 20.500Z" fill="#e6e6e6"/></svg>
  <svg class="abs" style="left:1596px;top:12px" width="17" height="16" viewBox="0 0 26 22"><ellipse cx="10" cy="8.500" rx="9.500" ry="8" fill="#2dc84d"/><path d="M4.500 14.500 L3.500 18.500 L8.500 16Z" fill="#2dc84d"/><ellipse cx="18" cy="14.500" rx="7.500" ry="6.300" fill="#e6e6e6"/><path d="M21.500 19.500 L23 22 L18.500 20.500Z" fill="#e6e6e6"/></svg>
  <svg class="abs" style="left:1620px;top:12px" width="16" height="16" viewBox="0 0 16 16"><circle cx="8" cy="8" r="8" fill="#f5c400"/><path d="M1 10 A7.500 7.500 0 0 0 15 10" fill="none" stroke="#4caf2c" stroke-width="1.600"/><path d="M8 4 V12 M4 8 H12" stroke="#2f8f1c" stroke-width="2.400"/></svg>
  <svg class="abs" style="left:1644px;top:12px" width="16" height="16" viewBox="0 0 26 24"><circle cx="13" cy="12.500" r="10.500" fill="#f4f4f4"/><circle cx="13" cy="12.500" r="10" fill="none" stroke="#3ebd2f" stroke-width="2.600"/><path d="M8 12.800 H18.300 A5.300 5.300 0 1 0 16.700 16.300" fill="none" stroke="#3ebd2f" stroke-width="3.200"/></svg>
  <svg class="abs" style="left:1668px;top:12px" width="17" height="16" viewBox="0 0 17 16"><path d="M1 5.500 H4 L8 2 V14 L4 10.500 H1Z" fill="none" stroke="#fff" stroke-width="1.200" stroke-linejoin="round"/><path d="M10.500 5.500 A3.500 3.500 0 0 1 10.500 10.500 M12.500 3.500 A6 6 0 0 1 12.500 12.500 M14.500 1.500 A9 9 0 0 1 14.500 14.500" fill="none" stroke="#fff" stroke-width="1.100"/></svg>
  <svg class="abs" style="left:1692px;top:13px" width="17" height="15" viewBox="0 0 17 15"><rect x="4.500" y="1" width="12" height="8.500" fill="none" stroke="#fff" stroke-width="1.200"/><path d="M10.500 9.500 V13 M7 13.500 H14" stroke="#fff" stroke-width="1.200"/><rect x="0.600" y="0.600" width="4" height="3.500" fill="#1d2d2d" stroke="#fff" stroke-width="1.100"/><path d="M2.500 4 V13.500 H6" fill="none" stroke="#fff" stroke-width="1.100"/></svg>
  <svg class="abs" style="left:1716px;top:13px" width="24" height="14" viewBox="0 0 24 14"><rect x="0.600" y="0.600" width="22.800" height="12.800" rx="1" fill="none" stroke="#fff" stroke-width="1.200"/><path d="M3 4 H21 M3 6.800 H21" stroke="#fff" stroke-width="1.200" stroke-dasharray="1.500 1.200"/><path d="M6 10 H18" stroke="#fff" stroke-width="1.300"/></svg>
  <svg class="abs" style="left:1747px;top:12px" width="16" height="16" viewBox="0 0 16 16"><circle cx="8" cy="8" r="7.500" fill="#7c8686"/><path d="M5 5 L11 11 M11 5 L5 11" stroke="#1d2d2d" stroke-width="1.800"/></svg>
  <svg class="abs" style="left:1775px;top:11px" width="18" height="18" viewBox="0 0 18 18"><path d="M2 3 L15 0.500 L17 13 L4 17Z" fill="#f04a1a"/><path d="M12.500 5 C9 3.500 6 4.500 6 6.500 C6 8.500 12 8 12 10.500 C12 12.500 8.500 13 5.500 11.500" fill="none" stroke="#fff" stroke-width="2.200"/></svg>
  <div class="abs" style="left:1803px;top:2px;width:112px;text-align:center;color:#fff;font-size:12.500px;line-height:18px;white-space:nowrap">15:55 周三<br><span style="letter-spacing:.3px">2024/10/23</span></div>
  <div class="abs" style="left:1914px;top:0;width:1px;height:40px;background:#7d8a8a"></div>
</div>
<!-- sogou mascot -->
<svg class="abs" style="left:1710px;top:940px;z-index:60" width="140" height="104" viewBox="1710 940 140 104">
  <defs><filter id="mb" x="-10%" y="-20%" width="120%" height="140%"><feGaussianBlur stdDeviation="1.700"/></filter></defs>
  <rect x="1721.500" y="989" width="108" height="52" rx="26" fill="#a9e6a2" stroke="#8a2d0a" stroke-width="1.400"/>
  <rect x="1725.500" y="993" width="100" height="44" rx="22" fill="#fff" filter="url(#mb)"/>
  <ellipse cx="1812" cy="1015" rx="13" ry="9.500" fill="#fff" stroke="#8a2d0a" stroke-width="1.200" transform="rotate(25 1812 1015)"/>
  <circle cx="1781.500" cy="999" r="29.500" fill="#fff" stroke="#8a2d0a" stroke-width="1.300"/>
  <path d="M1771 973 C1766 965 1770 962 1774 961" fill="none" stroke="#8a2d0a" stroke-width="1"/>
  <path d="M1771 971 C1764 972 1761 970 1761 969 C1763 966 1768 966 1771 971Z" fill="#7fd66f" stroke="#8a2d0a" stroke-width=".9"/>
  <path d="M1771 970 C1768 965 1771 960 1774 960 C1777 963 1775 968 1771 970Z" fill="#7fd66f" stroke="#8a2d0a" stroke-width=".9"/>
  <circle cx="1774.300" cy="1002.300" r="2.700" fill="#7a2408"/><circle cx="1792.700" cy="995.600" r="2.700" fill="#7a2408"/>
  <path d="M1779.500 999.500 q1.500 3.500 3.500 0.500 q1.800 2.500 4.500 -1.500" fill="none" stroke="#8a2d0a" stroke-width="1.100"/>
  <ellipse cx="1798" cy="997" rx="3" ry="2" fill="#fbd3b8"/><ellipse cx="1770" cy="1005" rx="2" ry="1.500" fill="#fbd3b8"/>
  <path d="M1768 1006 C1774 1006 1777 1010 1778 1014" fill="none" stroke="#8a2d0a" stroke-width="1.100"/>
  <path d="M1766 1015 C1768 1012 1772 1013 1773 1016 C1776 1019 1775 1025 1770 1026 C1765 1027 1762 1022 1766 1019Z" fill="#fff" stroke="#8a2d0a" stroke-width="1.100"/>
  <circle cx="1788.600" cy="1022" r="13" fill="#fff" stroke="#8a2d0a" stroke-width="1.200"/>
  <path d="M1792 1009 C1790 1006 1790 1004 1791 1003 M1792 1008 C1795 1008 1797 1006 1796 1005" fill="none" stroke="#5fb84f" stroke-width="1.400"/>
  <path d="M1781 1019 h3 M1790 1019 h3 M1784.500 1019.500 q1 1.500 2 0 q1 1.500 2.200 0" fill="none" stroke="#8a2d0a" stroke-width=".9"/>
  <ellipse cx="1779.500" cy="1021" rx="1.600" ry="1" fill="#fbd3b8"/><ellipse cx="1794.500" cy="1021" rx="1.600" ry="1" fill="#fbd3b8"/>
  <path d="M1797 1012 C1803 1008 1808 1008 1810 1006" fill="none" stroke="#8a2d0a" stroke-width="1.100"/>
  <text x="1736" y="1011.500" font-size="12" fill="#8a2d0a" text-anchor="middle" font-family="Liberation Sans,Noto Sans CJK SC,sans-serif">中</text>
  <path d="M1738 1022.500 L1741 1021.500 C1742 1023 1744 1023 1745 1021.500 L1748 1022.500 L1747 1026 L1745.500 1025.500 V1031.500 H1739.500 V1025.500 L1738.500 1026Z" fill="#8a3a14"/>
  <text x="1811" y="966" font-size="16" fill="#8a2d0a" stroke="#fff" stroke-width="1.800" paint-order="stroke" text-anchor="middle" transform="rotate(-8 1811 960)" font-family="Liberation Sans,Noto Sans CJK SC,sans-serif">乖~</text>
  <path d="M1830 957 C1824 952 1823 948 1826.500 947 C1828.500 946.500 1829.500 948 1830 949 C1830.500 948 1832 946.500 1834 947 C1837 948 1836 953 1830 957Z" fill="#ffb3b3" stroke="#fff" stroke-width="1.300"/>
</svg>
</body>
</html>
